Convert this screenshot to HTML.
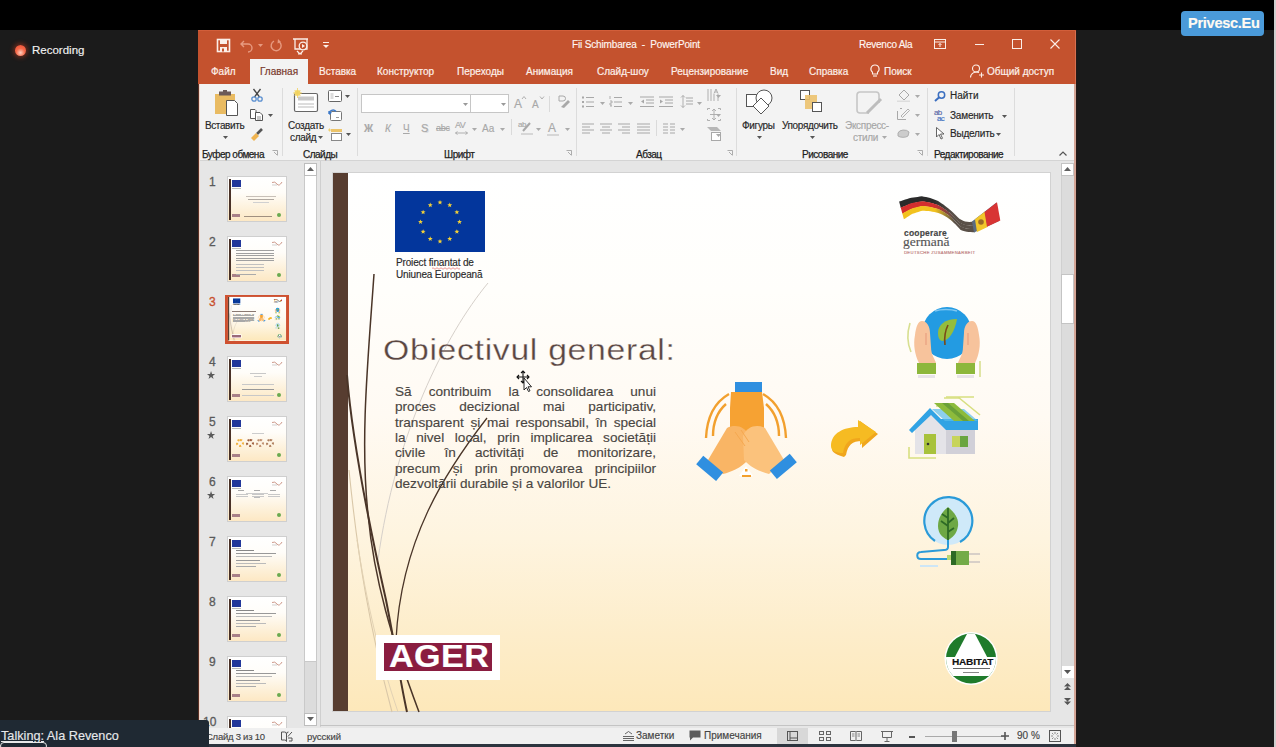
<!DOCTYPE html><html><head><meta charset="utf-8"><style>
*{margin:0;padding:0;box-sizing:border-box}
html,body{width:1276px;height:747px;overflow:hidden;background:#1b1b1b;font-family:"Liberation Sans",sans-serif}
.abs{position:absolute}
.t{position:absolute;white-space:nowrap;line-height:1;-webkit-text-stroke:0.15px currentColor}
svg{overflow:visible}
</style></head><body>
<div class="abs" style="left:0px;top:0px;width:1276px;height:30px;background:#000;"></div>
<div class="abs" style="left:1274px;top:0px;width:2px;height:747px;background:#cfcfcf;"></div>
<div class="abs" style="left:15px;top:45px;width:11px;height:11px;border-radius:50%;background:radial-gradient(circle at 50% 70%,#ffd0c0 0%,#f86a4a 45%,#e84a30 100%);box-shadow:0 0 4px 2px rgba(200,60,30,.45)"></div>
<div class="t" style="left:32px;top:45px;font-size:11.5px;color:#f2f2f2;">Recording</div>
<div class="abs" style="left:1181px;top:11px;width:83px;height:25px;background:#4a9ad9;border-radius:4px"></div>
<div class="t" style="left:1188px;top:15.5px;font-size:14.6px;color:#fffaf2;font-weight:bold;letter-spacing:-0.3px">Privesc.Eu</div>
<div class="abs" style="left:198px;top:30px;width:878px;height:714px;background:#e6e6e6;"></div>
<div class="abs" style="left:198px;top:30px;width:878px;height:54px;background:#c4522e;"></div>
<svg class="abs" style="left:217px;top:39px;" width="13" height="13" viewBox="0 0 13 13"><rect x="0.5" y="0.5" width="12" height="12" fill="none" stroke="#fbeee8" stroke-width="1.6"/><rect x="3" y="1" width="7" height="4" fill="#fbeee8"/><rect x="3" y="8" width="7" height="5" fill="#fbeee8"/><rect x="5" y="9.5" width="2" height="3" fill="#c4522e"/></svg>
<svg class="abs" style="left:240px;top:39px;" width="14" height="13" viewBox="0 0 14 13"><path d="M4 2 L1 5 L4 8 M1 5 H8 A4 4 0 0 1 8 13" fill="none" stroke="#e79a80" stroke-width="1.4"/></svg>
<svg class="abs" style="left:258px;top:44px;" width="5" height="3" viewBox="0 0 5 3"><path d="M0 0 H5 L2.5 3Z" fill="#e79a80"/></svg>
<svg class="abs" style="left:270px;top:39px;" width="13" height="13" viewBox="0 0 13 13"><path d="M9.5 3 A5 5 0 1 1 4 2.2" fill="none" stroke="#e79a80" stroke-width="1.4"/><path d="M8 0 L11 3 L7.5 4.5Z" fill="#e79a80"/></svg>
<svg class="abs" style="left:293px;top:38px;" width="16" height="17" viewBox="0 0 16 17"><path d="M0 1 H15 M2 1 V11 H14 V1" fill="none" stroke="#fbeee8" stroke-width="1.3"/><circle cx="10" cy="8" r="3.8" fill="#c4522e" stroke="#fbeee8" stroke-width="1.3"/><path d="M9 6 L12 8 L9 10Z" fill="#fbeee8"/><path d="M4 13 L7 16 M10 13 L7 16 M5 16 H9" stroke="#fbeee8" stroke-width="1.2"/></svg>
<svg class="abs" style="left:323px;top:42px;" width="6" height="7" viewBox="0 0 6 7"><path d="M0 0.5 H6" stroke="#fbeee8" stroke-width="1"/><path d="M0 3 H6 L3 6Z" fill="#fbeee8"/></svg>
<div class="t" style="left:572px;top:40px;font-size:10px;color:#fff6f2;letter-spacing:-0.15px">Fii Schimbarea &nbsp;- &nbsp;PowerPoint</div>
<div class="t" style="left:859px;top:40px;font-size:10px;color:#fff6f2;letter-spacing:-0.25px">Revenco Ala</div>
<svg class="abs" style="left:934px;top:39px;" width="12" height="10" viewBox="0 0 12 10"><rect x="0.5" y="0.5" width="11" height="9" fill="none" stroke="#fbeee8" stroke-width="1"/><path d="M0.5 3 H11.5 M6 4.5 V8 M4.5 6 L6 4.5 L7.5 6" fill="none" stroke="#fbeee8" stroke-width="1"/></svg>
<div class="abs" style="left:975px;top:44px;width:9px;height:1px;background:#fbeee8;"></div>
<svg class="abs" style="left:1012px;top:39px;" width="10" height="10" viewBox="0 0 10 10"><rect x="0.5" y="0.5" width="9" height="9" fill="none" stroke="#fbeee8" stroke-width="1"/></svg>
<svg class="abs" style="left:1050px;top:39px;" width="10" height="10" viewBox="0 0 10 10"><path d="M0.5 0.5 L9.5 9.5 M9.5 0.5 L0.5 9.5" stroke="#fbeee8" stroke-width="1.1"/></svg>
<div class="abs" style="left:250px;top:59px;width:58px;height:25px;background:#f3f3f3;"></div>
<div class="t" style="left:211px;top:67.3px;font-size:10px;color:#fdf0ea;-webkit-text-stroke:0.2px #fdf0ea">Файл</div>
<div class="t" style="left:319px;top:67.3px;font-size:10px;color:#fdf0ea;-webkit-text-stroke:0.2px #fdf0ea">Вставка</div>
<div class="t" style="left:377px;top:67.3px;font-size:10px;color:#fdf0ea;-webkit-text-stroke:0.2px #fdf0ea">Конструктор</div>
<div class="t" style="left:457px;top:67.3px;font-size:10px;color:#fdf0ea;-webkit-text-stroke:0.2px #fdf0ea">Переходы</div>
<div class="t" style="left:526px;top:67.3px;font-size:10px;color:#fdf0ea;-webkit-text-stroke:0.2px #fdf0ea">Анимация</div>
<div class="t" style="left:597px;top:67.3px;font-size:10px;color:#fdf0ea;-webkit-text-stroke:0.2px #fdf0ea">Слайд-шоу</div>
<div class="t" style="left:671px;top:67.3px;font-size:10px;color:#fdf0ea;-webkit-text-stroke:0.2px #fdf0ea">Рецензирование</div>
<div class="t" style="left:770px;top:67.3px;font-size:10px;color:#fdf0ea;-webkit-text-stroke:0.2px #fdf0ea">Вид</div>
<div class="t" style="left:809px;top:67.3px;font-size:10px;color:#fdf0ea;-webkit-text-stroke:0.2px #fdf0ea">Справка</div>
<div class="t" style="left:884px;top:67.3px;font-size:10px;color:#fdf0ea;-webkit-text-stroke:0.2px #fdf0ea">Поиск</div>
<div class="t" style="left:987px;top:67.3px;font-size:10px;color:#fdf0ea;-webkit-text-stroke:0.2px #fdf0ea">Общий доступ</div>
<div class="t" style="left:260px;top:67.3px;font-size:10px;color:#7a3a2e;-webkit-text-stroke:0.2px #7a3a2e">Главная</div>
<svg class="abs" style="left:870px;top:64px;" width="10" height="14" viewBox="0 0 10 14"><path d="M5 1 A4 4 0 0 1 7.5 8.2 V10 H2.5 V8.2 A4 4 0 0 1 5 1Z" fill="none" stroke="#fdf0ea" stroke-width="1.1"/><path d="M3 12 H7" stroke="#fdf0ea" stroke-width="1.1"/></svg>
<svg class="abs" style="left:970px;top:64px;" width="15" height="14" viewBox="0 0 15 14"><circle cx="6" cy="4.5" r="3.5" fill="none" stroke="#fdf0ea" stroke-width="1.1"/><path d="M0.5 13.5 A6 5.5 0 0 1 9 8.5" fill="none" stroke="#fdf0ea" stroke-width="1.1"/><path d="M9 11 H14 M11.5 8.5 V13.5" stroke="#fdf0ea" stroke-width="1.1"/></svg>
<div class="abs" style="left:198px;top:84px;width:878px;height:76px;background:#f3f3f3;"></div>
<div class="abs" style="left:198px;top:160px;width:878px;height:1px;background:#d4d4d4;"></div>
<div class="t" style="left:202px;top:149.5px;font-size:10px;color:#1e1e1e;letter-spacing:-0.5px;-webkit-text-stroke:0.25px #1e1e1e">Буфер обмена</div>
<div class="t" style="left:303px;top:149.5px;font-size:10px;color:#1e1e1e;letter-spacing:-0.5px;-webkit-text-stroke:0.25px #1e1e1e">Слайды</div>
<div class="t" style="left:444px;top:149.5px;font-size:10px;color:#1e1e1e;letter-spacing:-0.5px;-webkit-text-stroke:0.25px #1e1e1e">Шрифт</div>
<div class="t" style="left:636px;top:149.5px;font-size:10px;color:#1e1e1e;letter-spacing:-0.5px;-webkit-text-stroke:0.25px #1e1e1e">Абзац</div>
<div class="t" style="left:802px;top:149.5px;font-size:10px;color:#1e1e1e;letter-spacing:-0.5px;-webkit-text-stroke:0.25px #1e1e1e">Рисование</div>
<div class="t" style="left:934px;top:149.5px;font-size:10px;color:#1e1e1e;letter-spacing:-0.5px;-webkit-text-stroke:0.25px #1e1e1e">Редактирование</div>
<div class="abs" style="left:282px;top:88px;width:1px;height:68px;background:#dcdcdc;"></div>
<div class="abs" style="left:357px;top:88px;width:1px;height:68px;background:#dcdcdc;"></div>
<div class="abs" style="left:576px;top:88px;width:1px;height:68px;background:#dcdcdc;"></div>
<div class="abs" style="left:736px;top:88px;width:1px;height:68px;background:#dcdcdc;"></div>
<div class="abs" style="left:927px;top:88px;width:1px;height:68px;background:#dcdcdc;"></div>
<div class="abs" style="left:1014px;top:88px;width:1px;height:68px;background:#dcdcdc;"></div>
<svg class="abs" style="left:215px;top:90px;" width="24" height="26" viewBox="0 0 24 26"><rect x="0" y="4" width="20" height="20" fill="#e9bb62"/><rect x="4" y="1.5" width="12" height="4" fill="#6b5a58"/><rect x="8" y="0" width="4" height="3" fill="#6b5a58"/><path d="M11.5 10.5 H19.5 L22.5 13.5 V25.5 H11.5Z" fill="#fff" stroke="#555" stroke-width="1"/></svg>
<div class="t" style="left:205px;top:121px;font-size:10px;color:#262626;letter-spacing:-0.4px">Вставить</div>
<svg class="abs" style="left:223px;top:136px;" width="5" height="3" viewBox="0 0 5 3"><path d="M0 0 H5 L2.5 3Z" fill="#555"/></svg>
<svg class="abs" style="left:251px;top:89px;" width="12" height="13" viewBox="0 0 12 13"><path d="M2.5 0 L8.5 8 M9.5 0 L3.5 8" stroke="#454545" stroke-width="1.3"/><circle cx="3" cy="10" r="2.2" fill="none" stroke="#5a8fd0" stroke-width="1.3"/><circle cx="9" cy="10" r="2.2" fill="none" stroke="#5a8fd0" stroke-width="1.3"/></svg>
<svg class="abs" style="left:250px;top:109px;" width="13" height="12" viewBox="0 0 13 12"><path d="M0.5 0.5 H5 L6 1.5 V9.5 H0.5Z" fill="#fff" stroke="#555" stroke-width="1"/><path d="M5.5 3.5 H10 L12.5 6 V11.5 H5.5Z" fill="#fff" stroke="#555" stroke-width="1"/><path d="M7 8 H11 M7 10 H11" stroke="#777" stroke-width="0.8"/></svg>
<svg class="abs" style="left:268px;top:114px;" width="5" height="3" viewBox="0 0 5 3"><path d="M0 0 H5 L2.5 3Z" fill="#555"/></svg>
<svg class="abs" style="left:251px;top:128px;" width="12" height="13" viewBox="0 0 12 13"><path d="M6 6 L11 1" stroke="#555" stroke-width="2.6"/><path d="M0 10 L5 5 L8 8 L3 13Z" fill="#f0b450"/></svg>
<svg class="abs" style="left:293px;top:88px;" width="26" height="25" viewBox="0 0 26 25"><rect x="1.5" y="5.5" width="23" height="18" rx="1.5" fill="#fff" stroke="#666" stroke-width="1.2"/><rect x="5" y="8.5" width="16" height="4" fill="#c8c8c8"/><path d="M5 16 H21 M5 19 H21" stroke="#bbb" stroke-width="1"/><circle cx="4.5" cy="5" r="3" fill="#f5d96a"/><path d="M4.5 0 V10 M0 5 H9 M1.5 2 L7.5 8 M7.5 2 L1.5 8" stroke="#f0d060" stroke-width="0.8"/></svg>
<div class="t" style="left:288px;top:121px;font-size:10px;color:#262626;letter-spacing:-0.3px">Создать</div>
<div class="t" style="left:290px;top:133px;font-size:10px;color:#262626;letter-spacing:-0.3px">слайд</div>
<svg class="abs" style="left:318px;top:136px;" width="5" height="3" viewBox="0 0 5 3"><path d="M0 0 H5 L2.5 3Z" fill="#555"/></svg>
<svg class="abs" style="left:328px;top:90px;" width="14" height="12" viewBox="0 0 14 12"><rect x="0.5" y="0.5" width="13" height="11" rx="1" fill="#fff" stroke="#666" stroke-width="1"/><rect x="2.5" y="3" width="3" height="6" fill="#ddd"/><path d="M7 6.5 H11" stroke="#888" stroke-width="1"/></svg>
<svg class="abs" style="left:345px;top:95px;" width="5" height="3" viewBox="0 0 5 3"><path d="M0 0 H5 L2.5 3Z" fill="#555"/></svg>
<svg class="abs" style="left:328px;top:109px;" width="14" height="12" viewBox="0 0 14 12"><rect x="2.5" y="2.5" width="11" height="9" rx="1" fill="#fff" stroke="#777" stroke-width="1"/><path d="M1 5 A4 4 0 0 1 8 2.5" fill="none" stroke="#3b78c8" stroke-width="1.5"/><path d="M0 2 L1.5 6 L4 3.5Z" fill="#3b78c8"/><path d="M8 8.5 H11" stroke="#999" stroke-width="1"/></svg>
<svg class="abs" style="left:328px;top:127px;" width="15" height="14" viewBox="0 0 15 14"><path d="M0 3 L3 3 M1.5 1.5 L1.5 4.5" stroke="#f0d070" stroke-width="1"/><rect x="3" y="2" width="11" height="3" fill="#ecc46a"/><rect x="3.5" y="6.5" width="10" height="7" fill="#fff" stroke="#888" stroke-width="1"/></svg>
<svg class="abs" style="left:346px;top:133px;" width="5" height="3" viewBox="0 0 5 3"><path d="M0 0 H5 L2.5 3Z" fill="#555"/></svg>
<div class="abs" style="left:361px;top:94px;width:110px;height:19px;background:#fff;border:1px solid #c6c6c6"></div>
<div class="abs" style="left:470px;top:94px;width:39px;height:19px;background:#fff;border:1px solid #c6c6c6"></div>
<svg class="abs" style="left:463px;top:103px;" width="5" height="3" viewBox="0 0 5 3"><path d="M0 0 H5 L2.5 3Z" fill="#999"/></svg>
<svg class="abs" style="left:501px;top:103px;" width="5" height="3" viewBox="0 0 5 3"><path d="M0 0 H5 L2.5 3Z" fill="#999"/></svg>
<div class="t" style="left:514px;top:98px;font-size:12px;color:#a8a8a8;">A</div>
<div class="t" style="left:532px;top:100px;font-size:10px;color:#a8a8a8;">A</div>
<svg class="abs" style="left:522px;top:96px;" width="4" height="4" viewBox="0 0 4 4"><path d="M0 3 L2 0.5 L4 3" fill="none" stroke="#a8a8a8" stroke-width="0.9"/></svg>
<svg class="abs" style="left:540px;top:96px;" width="4" height="4" viewBox="0 0 4 4"><path d="M0 0.5 L2 3 L4 0.5" fill="none" stroke="#a8a8a8" stroke-width="0.9"/></svg>
<div class="abs" style="left:549px;top:96px;width:1px;height:16px;background:#dadada;"></div>
<svg class="abs" style="left:557px;top:95px;" width="13" height="13" viewBox="0 0 13 13"><path d="M2 1 H6 A2.5 2.5 0 0 1 6 6 H2Z" fill="none" stroke="#a8a8a8" stroke-width="1"/><path d="M4 12 L11 5 L13 7 L7 13Z" fill="#a8a8a8"/></svg>
<div class="t" style="left:364px;top:124px;font-size:10px;color:#a8a8a8;font-weight:bold">Ж</div>
<div class="t" style="left:385px;top:124px;font-size:10px;color:#a8a8a8;font-style:italic">К</div>
<div class="t" style="left:403px;top:124px;font-size:10px;color:#a8a8a8;text-decoration:underline">Ч</div>
<div class="t" style="left:421px;top:123px;font-size:11px;color:#a8a8a8;text-shadow:1px 1px 0 #ddd">S</div>
<div class="t" style="left:436px;top:124px;font-size:9px;color:#a8a8a8;text-decoration:line-through;letter-spacing:-0.3px">abc</div>
<div class="t" style="left:455px;top:121px;font-size:9px;color:#a8a8a8;letter-spacing:-0.5px">AV</div>
<svg class="abs" style="left:455px;top:131px;" width="13" height="4" viewBox="0 0 13 4"><path d="M0.5 2 H12.5 M2.5 0.5 L0.5 2 L2.5 3.5 M10.5 0.5 L12.5 2 L10.5 3.5" fill="none" stroke="#a8a8a8" stroke-width="0.9"/></svg>
<svg class="abs" style="left:472px;top:128px;" width="5" height="3" viewBox="0 0 5 3"><path d="M0 0 H5 L2.5 3Z" fill="#aaa"/></svg>
<div class="t" style="left:482px;top:124px;font-size:10px;color:#a8a8a8;">Aa</div>
<svg class="abs" style="left:500px;top:128px;" width="5" height="3" viewBox="0 0 5 3"><path d="M0 0 H5 L2.5 3Z" fill="#aaa"/></svg>
<div class="abs" style="left:511px;top:119px;width:1px;height:16px;background:#dadada;"></div>
<div class="t" style="left:518px;top:121px;font-size:8px;color:#a8a8a8;letter-spacing:-0.5px">ab</div>
<svg class="abs" style="left:521px;top:121px;" width="11" height="14" viewBox="0 0 11 14"><path d="M2 10 L9 2" stroke="#a8a8a8" stroke-width="2"/><rect x="0" y="12" width="12" height="2" fill="#d6d6d6"/></svg>
<svg class="abs" style="left:536px;top:128px;" width="5" height="3" viewBox="0 0 5 3"><path d="M0 0 H5 L2.5 3Z" fill="#aaa"/></svg>
<div class="t" style="left:548px;top:122px;font-size:12px;color:#a8a8a8;">A</div>
<svg class="abs" style="left:547px;top:134px;" width="12" height="2" viewBox="0 0 12 2"><rect width="12" height="2" fill="#d6d6d6"/></svg>
<svg class="abs" style="left:565px;top:128px;" width="5" height="3" viewBox="0 0 5 3"><path d="M0 0 H5 L2.5 3Z" fill="#aaa"/></svg>
<svg class="abs" style="left:566px;top:150px;" width="6" height="6" viewBox="0 0 6 6"><path d="M0.5 0.5 H5.5 V5.5 M2 2 L5 5" fill="none" stroke="#9a9a9a" stroke-width="0.8"/></svg>
<svg class="abs" style="left:272px;top:150px;" width="6" height="6" viewBox="0 0 6 6"><path d="M0.5 0.5 H5.5 V5.5 M2 2 L5 5" fill="none" stroke="#9a9a9a" stroke-width="0.8"/></svg>
<svg class="abs" style="left:727px;top:150px;" width="6" height="6" viewBox="0 0 6 6"><path d="M0.5 0.5 H5.5 V5.5 M2 2 L5 5" fill="none" stroke="#9a9a9a" stroke-width="0.8"/></svg>
<svg class="abs" style="left:917px;top:150px;" width="6" height="6" viewBox="0 0 6 6"><path d="M0.5 0.5 H5.5 V5.5 M2 2 L5 5" fill="none" stroke="#9a9a9a" stroke-width="0.8"/></svg>
<svg class="abs" style="left:582px;top:96px;" width="13" height="12" viewBox="0 0 13 12"><rect x="0" y="0.5" width="2" height="2" fill="#a8a8a8"/><rect x="0" y="5" width="2" height="2" fill="#a8a8a8"/><rect x="0" y="9.5" width="2" height="2" fill="#a8a8a8"/><path d="M4 1.5 H12 M4 6 H12 M4 10.5 H12" stroke="#a8a8a8" stroke-width="1.2"/></svg>
<svg class="abs" style="left:600px;top:102px;" width="5" height="3" viewBox="0 0 5 3"><path d="M0 0 H5 L2.5 3Z" fill="#aaa"/></svg>
<svg class="abs" style="left:610px;top:96px;" width="13" height="12" viewBox="0 0 13 12"><path d="M0 0 V3 M0 5 H2 V7 H0 V9 H2 M0 10 H2" stroke="#a8a8a8" stroke-width="0.9" fill="none"/><path d="M4 1.5 H12 M4 6 H12 M4 10.5 H12" stroke="#a8a8a8" stroke-width="1.2"/></svg>
<svg class="abs" style="left:628px;top:102px;" width="5" height="3" viewBox="0 0 5 3"><path d="M0 0 H5 L2.5 3Z" fill="#aaa"/></svg>
<svg class="abs" style="left:640px;top:96px;" width="14" height="12" viewBox="0 0 14 12"><path d="M0 1 H14 M6 4 H14 M6 7 H14 M0 10.5 H14" stroke="#a8a8a8" stroke-width="1.1"/><path d="M4 3.5 L1 5.5 L4 7.5Z" fill="#a8a8a8"/></svg>
<svg class="abs" style="left:659px;top:96px;" width="14" height="12" viewBox="0 0 14 12"><path d="M0 1 H14 M6 4 H14 M6 7 H14 M0 10.5 H14" stroke="#a8a8a8" stroke-width="1.1"/><path d="M1 3.5 L4 5.5 L1 7.5Z" fill="#a8a8a8"/></svg>
<svg class="abs" style="left:681px;top:95px;" width="12" height="13" viewBox="0 0 12 13"><path d="M2 0.5 V12.5 M0 2.5 L2 0.5 L4 2.5 M0 10.5 L2 12.5 L4 10.5" fill="none" stroke="#a8a8a8" stroke-width="0.9"/><path d="M5 3 H12 M5 6 H12 M5 9 H12" stroke="#a8a8a8" stroke-width="1.1"/></svg>
<svg class="abs" style="left:697px;top:102px;" width="5" height="3" viewBox="0 0 5 3"><path d="M0 0 H5 L2.5 3Z" fill="#aaa"/></svg>
<svg class="abs" style="left:707px;top:89px;" width="14" height="13" viewBox="0 0 14 13"><path d="M1 0 V12 M4 0 V12 M7 5 V12 M11 5 V12" stroke="#a8a8a8" stroke-width="0.9"/><path d="M9 0 L7 4.5 M9 0 L11 4.5 M8 3 H10" stroke="#a8a8a8" stroke-width="0.9" fill="none"/></svg>
<svg class="abs" style="left:716px;top:95px;" width="5" height="3" viewBox="0 0 5 3"><path d="M0 0 H5 L2.5 3Z" fill="#aaa"/></svg>
<svg class="abs" style="left:707px;top:108px;" width="14" height="13" viewBox="0 0 14 13"><path d="M0.5 2 V0.5 H3 M11 0.5 H13.5 V2 M0.5 11 V12.5 H3 M11 12.5 H13.5 V11" fill="none" stroke="#a8a8a8" stroke-width="0.9"/><path d="M3 6.5 H11 M7 1 V12 M5 3 L7 1 L9 3 M5 10 L7 12 L9 10" fill="none" stroke="#a8a8a8" stroke-width="0.9"/></svg>
<svg class="abs" style="left:716px;top:114px;" width="5" height="3" viewBox="0 0 5 3"><path d="M0 0 H5 L2.5 3Z" fill="#aaa"/></svg>
<svg class="abs" style="left:707px;top:127px;" width="14" height="14" viewBox="0 0 14 14"><path d="M0 0 H10 L14 4 H4Z" fill="#a8a8a8" opacity=".8"/><rect x="4.5" y="5.5" width="9" height="8" fill="#fff" stroke="#a8a8a8"/></svg>
<svg class="abs" style="left:716px;top:134px;" width="5" height="3" viewBox="0 0 5 3"><path d="M0 0 H5 L2.5 3Z" fill="#aaa"/></svg>
<svg class="abs" style="left:582px;top:123px;" width="13" height="11" viewBox="0 0 13 11"><path d="M0 1 H12 M0 4 H8 M0 7 H12 M0 10 H8" stroke="#a8a8a8" stroke-width="1.1"/></svg>
<svg class="abs" style="left:600px;top:123px;" width="13" height="11" viewBox="0 0 13 11"><path d="M0 1 H12 M2 4 H10 M0 7 H12 M2 10 H10" stroke="#a8a8a8" stroke-width="1.1"/></svg>
<svg class="abs" style="left:618px;top:123px;" width="13" height="11" viewBox="0 0 13 11"><path d="M0 1 H12 M4 4 H12 M0 7 H12 M4 10 H12" stroke="#a8a8a8" stroke-width="1.1"/></svg>
<svg class="abs" style="left:637px;top:123px;" width="13" height="11" viewBox="0 0 13 11"><path d="M0 1 H13 M0 4 H13 M0 7 H13 M0 10 H13" stroke="#a8a8a8" stroke-width="1.1"/></svg>
<div class="abs" style="left:656px;top:120px;width:1px;height:16px;background:#dadada;"></div>
<svg class="abs" style="left:663px;top:123px;" width="12" height="11" viewBox="0 0 12 11"><path d="M0 1 H5 M7 1 H12 M0 4 H5 M7 4 H12 M0 7 H5 M7 7 H12 M0 10 H5 M7 10 H12" stroke="#a8a8a8" stroke-width="1.1"/></svg>
<svg class="abs" style="left:680px;top:128px;" width="5" height="3" viewBox="0 0 5 3"><path d="M0 0 H5 L2.5 3Z" fill="#aaa"/></svg>
<svg class="abs" style="left:746px;top:89px;" width="27" height="27" viewBox="0 0 27 27"><rect x="0.5" y="5.5" width="14" height="12" fill="#fff" stroke="#555" stroke-width="1"/><circle cx="18" cy="9" r="8" fill="#fff" stroke="#555" stroke-width="1"/><path d="M15 9 L23 17 L15 25 L7 17Z" fill="#fff" stroke="#555" stroke-width="1"/></svg>
<div class="t" style="left:742px;top:121px;font-size:10px;color:#262626;letter-spacing:-0.3px">Фигуры</div>
<svg class="abs" style="left:757px;top:136px;" width="5" height="3" viewBox="0 0 5 3"><path d="M0 0 H5 L2.5 3Z" fill="#555"/></svg>
<svg class="abs" style="left:800px;top:90px;" width="23" height="24" viewBox="0 0 23 24"><rect x="0.5" y="0.5" width="9" height="9" fill="#fff" stroke="#555"/><rect x="5" y="5" width="12" height="14" fill="#ecc26e" opacity=".9"/><rect x="12.5" y="12.5" width="9" height="9" fill="#fff" stroke="#555"/></svg>
<div class="t" style="left:782px;top:121px;font-size:10px;color:#262626;letter-spacing:-0.35px">Упорядочить</div>
<svg class="abs" style="left:810px;top:136px;" width="5" height="3" viewBox="0 0 5 3"><path d="M0 0 H5 L2.5 3Z" fill="#555"/></svg>
<svg class="abs" style="left:857px;top:91px;" width="26" height="25" viewBox="0 0 26 25"><path d="M3 1 H19 A3 3 0 0 1 22 4 V12 M3 1 A3 3 0 0 0 0 4 V19 A3 3 0 0 0 3 22 H12" fill="none" stroke="#c6c6c6" stroke-width="1.6"/><path d="M10 22 L24 8" stroke="#bdbdbd" stroke-width="3"/></svg>
<div class="t" style="left:845px;top:121px;font-size:10px;color:#a6a6a6;letter-spacing:-0.3px">Экспресс-</div>
<div class="t" style="left:853px;top:133px;font-size:10px;color:#a6a6a6;letter-spacing:-0.3px">стили</div>
<svg class="abs" style="left:882px;top:136px;" width="5" height="3" viewBox="0 0 5 3"><path d="M0 0 H5 L2.5 3Z" fill="#aaa"/></svg>
<svg class="abs" style="left:897px;top:89px;" width="13" height="13" viewBox="0 0 13 13"><path d="M2 6 L7 1 L12 6 L7 11Z" fill="none" stroke="#a8a8a8" stroke-width="1"/><rect x="0" y="11.5" width="13" height="1.5" fill="#ddd"/></svg>
<svg class="abs" style="left:915px;top:95px;" width="5" height="3" viewBox="0 0 5 3"><path d="M0 0 H5 L2.5 3Z" fill="#aaa"/></svg>
<svg class="abs" style="left:897px;top:108px;" width="13" height="12" viewBox="0 0 13 12"><path d="M0.5 3 V11.5 H9 M3 0.5 H5" fill="none" stroke="#a8a8a8" stroke-width="1"/><path d="M4 8 L11 1 L12.5 2.5 L5.5 9.5Z" fill="none" stroke="#a8a8a8" stroke-width="0.9"/></svg>
<svg class="abs" style="left:915px;top:114px;" width="5" height="3" viewBox="0 0 5 3"><path d="M0 0 H5 L2.5 3Z" fill="#aaa"/></svg>
<svg class="abs" style="left:897px;top:127px;" width="13" height="11" viewBox="0 0 13 11"><path d="M1 6 A6 4 0 0 1 12 5 L11 9 A6 3 0 0 1 1 9Z" fill="#ccc" stroke="#a8a8a8" stroke-width="0.9"/></svg>
<svg class="abs" style="left:915px;top:133px;" width="5" height="3" viewBox="0 0 5 3"><path d="M0 0 H5 L2.5 3Z" fill="#aaa"/></svg>
<svg class="abs" style="left:934px;top:91px;" width="12" height="10" viewBox="0 0 12 10"><circle cx="7.5" cy="4" r="3.2" fill="none" stroke="#3b6fc0" stroke-width="1.5"/><path d="M5.2 6.3 L1 10" stroke="#3b6fc0" stroke-width="2"/></svg>
<div class="t" style="left:950px;top:91px;font-size:10px;color:#262626;">Найти</div>
<div class="t" style="left:934px;top:109px;font-size:8px;color:#5a6aa8;letter-spacing:-0.6px">ab</div>
<div class="t" style="left:937px;top:115px;font-size:8px;color:#3b6fc0;letter-spacing:-0.6px">ac</div>
<div class="t" style="left:950px;top:111px;font-size:10px;color:#262626;letter-spacing:-0.2px">Заменить</div>
<svg class="abs" style="left:1002px;top:115px;" width="5" height="3" viewBox="0 0 5 3"><path d="M0 0 H5 L2.5 3Z" fill="#555"/></svg>
<svg class="abs" style="left:936px;top:127px;" width="10" height="13" viewBox="0 0 10 13"><path d="M0.5 0.5 L0.5 10 L3 7.5 L5 12 L6.5 11.3 L4.5 7 L8 7Z" fill="#fff" stroke="#555" stroke-width="0.9"/></svg>
<div class="t" style="left:950px;top:129px;font-size:10px;color:#262626;letter-spacing:-0.2px">Выделить</div>
<svg class="abs" style="left:996px;top:133px;" width="5" height="3" viewBox="0 0 5 3"><path d="M0 0 H5 L2.5 3Z" fill="#555"/></svg>
<svg class="abs" style="left:1059px;top:151px;" width="8" height="5" viewBox="0 0 8 5"><path d="M0.5 4.5 L4 1 L7.5 4.5" fill="none" stroke="#555" stroke-width="1.2"/></svg>
<div class="abs" style="left:198px;top:161px;width:878px;height:566px;background:#e6e6e6;"></div>
<div class="abs" style="left:320px;top:161px;width:1px;height:566px;background:#cfcfcf;"></div>
<div class="abs" style="left:304px;top:163px;width:13px;height:563px;background:#dcdcdc;border-left:1px solid #c9c9c9;border-right:1px solid #c9c9c9"></div>
<div class="abs" style="left:304px;top:175px;width:13px;height:487px;background:#ffffff;border:1px solid #c9c9c9"></div>
<div class="abs" style="left:304px;top:163px;width:13px;height:13px;background:#fff;border:1px solid #bdbdbd"></div>
<svg class="abs" style="left:307px;top:167px;" width="7" height="4" viewBox="0 0 7 4"><path d="M0 4 L3.5 0 L7 4Z" fill="#606060"/></svg>
<div class="abs" style="left:304px;top:713px;width:13px;height:13px;background:#fff;border:1px solid #bdbdbd"></div>
<svg class="abs" style="left:307px;top:717px;" width="7" height="4" viewBox="0 0 7 4"><path d="M0 0 L3.5 4 L7 0Z" fill="#606060"/></svg>
<div class="abs" style="left:1061px;top:163px;width:13px;height:515px;background:#dcdcdc;border-left:1px solid #d0d0d0"></div>
<div class="abs" style="left:1061px;top:163px;width:13px;height:13px;background:#fff;border:1px solid #c4c4c4"></div>
<svg class="abs" style="left:1064px;top:167px;" width="7" height="4" viewBox="0 0 7 4"><path d="M0 4 L3.5 0 L7 4Z" fill="#606060"/></svg>
<div class="abs" style="left:1061px;top:274px;width:13px;height:50px;background:#fff;border:1px solid #c4c4c4"></div>
<div class="abs" style="left:1062px;top:666px;width:12px;height:12px;background:#fff;"></div>
<svg class="abs" style="left:1064px;top:670px;" width="7" height="4" viewBox="0 0 7 4"><path d="M0 0 L3.5 4 L7 0Z" fill="#555"/></svg>
<svg class="abs" style="left:1064px;top:683px;" width="7" height="7" viewBox="0 0 7 7"><path d="M0 3.5 L3.5 0 L7 3.5Z M0 7 L3.5 3.5 L7 7Z" fill="#555"/></svg>
<svg class="abs" style="left:1064px;top:698px;" width="7" height="7" viewBox="0 0 7 7"><path d="M0 0 L3.5 3.5 L7 0Z M0 3.5 L3.5 7 L7 3.5Z" fill="#555"/></svg>
<div class="abs" style="left:320px;top:725px;width:754px;height:1px;background:#c4c4c4;"></div>
<div class="abs" style="left:198px;top:728px;width:876px;height:16px;background:#f0f0f0;"></div>
<div class="t" style="left:206px;top:731.5px;font-size:9.5px;color:#444;letter-spacing:-0.25px">Слайд 3 из 10</div>
<svg class="abs" style="left:281px;top:731px;" width="12" height="11" viewBox="0 0 12 11"><path d="M0.5 1 H3.5 Q5.5 1 5.5 3 V10.5 Q5.5 9 3.5 9 H0.5Z M5.5 3 Q5.5 1 7.5 1" fill="none" stroke="#555" stroke-width="1"/><path d="M7 5.5 Q9 3 11 1 M7 7 H11 V10 H8" fill="none" stroke="#555" stroke-width="1"/></svg>
<div class="t" style="left:307px;top:731.5px;font-size:9.5px;color:#444;">русский</div>
<svg class="abs" style="left:623px;top:731px;" width="11" height="10" viewBox="0 0 11 10"><path d="M2 3 L5.5 0.5 L9 3" fill="none" stroke="#555" stroke-width="0.9"/><path d="M0 5.5 H11 M0 7.5 H11 M0 9.5 H11" stroke="#555" stroke-width="0.9"/></svg>
<div class="t" style="left:636px;top:731px;font-size:10px;color:#444;">Заметки</div>
<svg class="abs" style="left:689px;top:730px;" width="12" height="11" viewBox="0 0 12 11"><path d="M0.5 0.5 H11.5 V7.5 H4 L1 10.5 V7.5 H0.5Z" fill="#5b5b5b"/></svg>
<div class="t" style="left:704px;top:731px;font-size:10px;color:#444;">Примечания</div>
<div class="abs" style="left:777px;top:728px;width:31px;height:16px;background:#d8d8d8;"></div>
<svg class="abs" style="left:787px;top:731px;" width="11" height="10" viewBox="0 0 11 10"><rect x="0.5" y="0.5" width="10" height="9" fill="none" stroke="#555"/><path d="M3 0.5 V9.5 M3 7 H10.5" stroke="#555"/></svg>
<svg class="abs" style="left:819px;top:731px;" width="12" height="10" viewBox="0 0 12 10"><rect x="0.5" y="0.5" width="4" height="3" fill="none" stroke="#666"/><rect x="7.5" y="0.5" width="4" height="3" fill="none" stroke="#666"/><rect x="0.5" y="6.5" width="4" height="3" fill="none" stroke="#666"/><rect x="7.5" y="6.5" width="4" height="3" fill="none" stroke="#666"/></svg>
<svg class="abs" style="left:850px;top:731px;" width="12" height="10" viewBox="0 0 12 10"><path d="M0.5 0.5 H5.5 L6 1 L6.5 0.5 H11.5 V9.5 H6.5 L6 9 L5.5 9.5 H0.5Z M6 1 V9" fill="none" stroke="#666"/><path d="M2 3 H4.5 M2 5 H4.5 M7.5 3 H10 M7.5 5 H10" stroke="#888"/></svg>
<svg class="abs" style="left:881px;top:731px;" width="12" height="11" viewBox="0 0 12 11"><path d="M0 0.5 H12 M1.5 0.5 V6.5 H10.5 V0.5 M6 6.5 V10.5 M3.5 10.5 H8.5" fill="none" stroke="#666"/></svg>
<div class="abs" style="left:909px;top:736px;width:6px;height:1.5px;background:#555;"></div>
<div class="abs" style="left:925px;top:736px;width:80px;height:1px;background:#aaa;"></div>
<div class="abs" style="left:952px;top:731px;width:5px;height:11px;background:#777;"></div>
<svg class="abs" style="left:1001px;top:732px;" width="8" height="8" viewBox="0 0 8 8"><path d="M4 0 V8 M0 4 H8" stroke="#555" stroke-width="1.6"/></svg>
<div class="t" style="left:1017px;top:731px;font-size:10px;color:#444;">90 %</div>
<svg class="abs" style="left:1049px;top:730px;" width="12" height="12" viewBox="0 0 12 12"><rect x="0.5" y="0.5" width="11" height="11" fill="none" stroke="#555"/><path d="M6 2 V4 M6 8 V10 M2 6 H4 M8 6 H10 M3 3 L4.5 4.5 M9 3 L7.5 4.5 M3 9 L4.5 7.5 M9 9 L7.5 7.5" stroke="#777" stroke-width="0.8"/></svg>
<div class="abs" style="left:333px;top:173px;width:717px;height:538px;background:linear-gradient(to bottom,#ffffff 0%,#fffefb 22%,#fffaf3 45%,#fef4df 68%,#fdedca 86%,#fde8ba 100%);box-shadow:0 0 0 1px #d2d2d2"></div>
<div class="abs" style="left:333px;top:173px;width:14.8px;height:538px;background:#573d30;"></div>
<svg class="abs" style="left:333px;top:173px;" width="717" height="538" viewBox="0 0 717 538"><g fill="none" transform="translate(-333,-173)"><path d="M488 283 C445 335 395 435 378 560" stroke="#d6d0ca" stroke-width="1"/><path d="M349 470 C358 560 370 630 392 712" stroke="#d9c7a8" stroke-width="1.1"/><path d="M357 540 C366 600 380 660 398 712" stroke="#e2d2b4" stroke-width="1"/><path d="M374 274 C368 360 360 440 368 514 C374 580 392 640 419 712" stroke="#4a3528" stroke-width="1.5"/><path d="M347 375 C352 440 368 520 386 600 C394 640 400 680 407 712" stroke="#4a3528" stroke-width="2"/><path d="M487 418 C445 472 401 540 396 640" stroke="#4a3528" stroke-width="1.3"/></g></svg>
<svg class="abs" style="left:395px;top:191px;" width="90" height="61" viewBox="0 0 90 61"><rect width="90" height="61" fill="#03369c"/><polygon points="45.00,8.90 45.65,10.61 47.47,10.70 46.05,11.84 46.53,13.60 45.00,12.60 43.47,13.60 43.95,11.84 42.53,10.70 44.35,10.61" fill="#f2d038"/><polygon points="54.75,11.51 55.40,13.22 57.22,13.31 55.80,14.45 56.28,16.22 54.75,15.21 53.22,16.22 53.70,14.45 52.28,13.31 54.10,13.22" fill="#f2d038"/><polygon points="61.89,18.65 62.53,20.36 64.36,20.45 62.93,21.59 63.42,23.35 61.89,22.35 60.36,23.35 60.84,21.59 59.41,20.45 61.24,20.36" fill="#f2d038"/><polygon points="64.50,28.40 65.15,30.11 66.97,30.20 65.55,31.34 66.03,33.10 64.50,32.10 62.97,33.10 63.45,31.34 62.03,30.20 63.85,30.11" fill="#f2d038"/><polygon points="61.89,38.15 62.53,39.86 64.36,39.95 62.93,41.09 63.42,42.85 61.89,41.85 60.36,42.85 60.84,41.09 59.41,39.95 61.24,39.86" fill="#f2d038"/><polygon points="54.75,45.29 55.40,47.00 57.22,47.08 55.80,48.23 56.28,49.99 54.75,48.99 53.22,49.99 53.70,48.23 52.28,47.08 54.10,47.00" fill="#f2d038"/><polygon points="45.00,47.90 45.65,49.61 47.47,49.70 46.05,50.84 46.53,52.60 45.00,51.60 43.47,52.60 43.95,50.84 42.53,49.70 44.35,49.61" fill="#f2d038"/><polygon points="35.25,45.29 35.90,47.00 37.72,47.08 36.30,48.23 36.78,49.99 35.25,48.99 33.72,49.99 34.20,48.23 32.78,47.08 34.60,47.00" fill="#f2d038"/><polygon points="28.11,38.15 28.76,39.86 30.59,39.95 29.16,41.09 29.64,42.85 28.11,41.85 26.58,42.85 27.07,41.09 25.64,39.95 27.47,39.86" fill="#f2d038"/><polygon points="25.50,28.40 26.15,30.11 27.97,30.20 26.55,31.34 27.03,33.10 25.50,32.10 23.97,33.10 24.45,31.34 23.03,30.20 24.85,30.11" fill="#f2d038"/><polygon points="28.11,18.65 28.76,20.36 30.59,20.45 29.16,21.59 29.64,23.35 28.11,22.35 26.58,23.35 27.07,21.59 25.64,20.45 27.47,20.36" fill="#f2d038"/><polygon points="35.25,11.51 35.90,13.22 37.72,13.31 36.30,14.45 36.78,16.22 35.25,15.21 33.72,16.22 34.20,14.45 32.78,13.31 34.60,13.22" fill="#f2d038"/></svg>
<div class="t" style="left:396px;top:258px;font-size:10px;color:#2a2a2a;letter-spacing:-0.15px">Proiect finantat de</div>
<div class="t" style="left:396px;top:269.5px;font-size:10px;color:#2a2a2a;letter-spacing:-0.15px">Uniunea Europeană</div>
<svg class="abs" style="left:432px;top:267px;" width="32" height="3" viewBox="0 0 32 3"><path d="M0 1.5 Q1 0 2 1.5 T4 1.5 T6 1.5 T8 1.5 T10 1.5 T12 1.5 T14 1.5 T16 1.5 T18 1.5 T20 1.5 T22 1.5 T24 1.5 T26 1.5 T28 1.5" fill="none" stroke="#e05050" stroke-width="0.6"/></svg>
<div class="t" style="left:383px;top:335.5px;font-size:29px;color:#5a4642;letter-spacing:0.6px;transform:scaleX(1.163);transform-origin:0 0;-webkit-text-stroke:0.3px #fffcf6">Obiectivul general:</div>
<div class="t" style="left:395px;top:385.00px;width:261px;font-size:13.6px;color:#4a4642;text-align:justify;text-align-last:justify">Să contribuim la consolidarea unui</div>
<div class="t" style="left:395px;top:400.37px;width:261px;font-size:13.6px;color:#4a4642;text-align:justify;text-align-last:justify">proces decizional mai participativ,</div>
<div class="t" style="left:395px;top:415.74px;width:261px;font-size:13.6px;color:#4a4642;text-align:justify;text-align-last:justify">transparent și mai responsabil, în special</div>
<div class="t" style="left:395px;top:431.11px;width:261px;font-size:13.6px;color:#4a4642;text-align:justify;text-align-last:justify">la nivel local, prin implicarea societății</div>
<div class="t" style="left:395px;top:446.48px;width:261px;font-size:13.6px;color:#4a4642;text-align:justify;text-align-last:justify">civile în activități de monitorizare,</div>
<div class="t" style="left:395px;top:461.85px;width:261px;font-size:13.6px;color:#4a4642;text-align:justify;text-align-last:justify">precum și prin promovarea principiilor</div>
<div class="t" style="left:395px;top:477.22px;font-size:13.6px;color:#4a4642;">dezvoltării durabile și a valorilor UE.</div>
<div class="abs" style="left:376px;top:635px;width:124px;height:45px;background:#ffffff;"></div>
<div class="abs" style="left:384px;top:643px;width:108px;height:28px;background:#8a1d40;"></div>
<div class="t" style="left:389px;top:640.8px;font-size:31.6px;color:#ffffff;font-weight:bold;letter-spacing:0.4px;transform:scaleX(1.08);transform-origin:0 0">AGER</div>
<svg class="abs" style="left:898px;top:196px;" width="104" height="38" viewBox="0 0 104 38"><defs><linearGradient id="gk" x1="0" x2="1" y1="0" y2="0"><stop offset="0.45" stop-color="#2a2a2a"/><stop offset="0.72" stop-color="#5a5048"/></linearGradient><linearGradient id="gr" x1="0" x2="1"><stop offset="0.45" stop-color="#d42e2e"/><stop offset="0.72" stop-color="#5a5048"/></linearGradient><linearGradient id="gy" x1="0" x2="1"><stop offset="0.45" stop-color="#f2c21e"/><stop offset="0.72" stop-color="#5a5048"/></linearGradient></defs><polygon points="1.1,5.6 3.1,4.9 5.1,4.3 7.2,3.6 9.2,2.9 11.2,2.3 13.3,1.8 15.4,1.5 17.5,1.2 19.6,0.9 21.7,0.6 23.9,0.3 25.9,0.7 28.0,1.1 30.1,1.6 32.2,2.0 34.2,2.7 36.2,3.5 38.2,4.3 40.1,5.1 41.9,6.3 43.7,7.4 45.4,8.6 47.2,9.9 48.8,11.2 50.5,12.5 52.2,13.9 53.7,15.3 55.3,16.8 56.8,18.3 58.3,19.8 59.8,21.3 61.4,22.7 63.2,23.8 65.1,24.7 67.1,25.4 69.2,25.7 71.4,26.0 73.5,25.8 75.6,25.6 76.0,29.4 73.9,29.5 71.8,29.6 69.7,29.4 67.6,29.2 65.7,28.5 63.7,27.7 61.9,26.8 60.3,25.4 58.9,23.9 57.4,22.4 55.9,20.9 54.4,19.4 52.9,18.0 51.3,16.6 49.6,15.4 47.9,14.1 46.2,12.9 44.5,11.8 42.7,10.7 40.9,9.6 38.9,8.8 36.9,8.2 35.0,7.5 33.0,6.9 30.9,6.5 28.8,6.2 26.8,5.8 24.7,5.6 22.6,5.7 20.6,6.1 18.5,6.5 16.5,6.9 14.4,7.4 12.4,7.9 10.5,8.7 8.6,9.5 6.6,10.3 4.7,11.1 2.8,12.0" fill="url(#gk)"/><polygon points="2.7,11.6 4.6,10.8 6.6,10.0 8.5,9.2 10.4,8.3 12.3,7.6 14.4,7.1 16.4,6.6 18.5,6.2 20.5,5.8 22.6,5.4 24.7,5.3 26.7,5.5 28.8,5.9 30.9,6.2 32.9,6.7 34.9,7.2 36.9,7.9 38.9,8.6 40.8,9.4 42.6,10.5 44.4,11.5 46.2,12.7 47.9,13.9 49.6,15.1 51.2,16.4 52.8,17.8 54.4,19.2 55.9,20.7 57.4,22.1 58.8,23.6 60.3,25.2 61.9,26.5 63.7,27.5 65.6,28.3 67.6,29.0 69.7,29.2 71.8,29.4 73.9,29.3 76.0,29.2 76.4,32.9 74.3,33.0 72.2,33.0 70.2,32.8 68.1,32.6 66.1,32.0 64.2,31.3 62.3,30.5 60.8,29.1 59.4,27.6 58.0,26.1 56.5,24.6 55.0,23.2 53.5,21.8 52.0,20.4 50.4,19.1 48.7,18.0 46.9,16.8 45.2,15.7 43.4,14.8 41.5,13.8 39.6,13.0 37.6,12.5 35.7,11.9 33.7,11.4 31.6,11.0 29.6,10.8 27.5,10.5 25.5,10.3 23.4,10.3 21.4,10.9 19.4,11.4 17.4,11.9 15.5,12.4 13.5,13.0 11.6,13.9 9.8,14.9 8.0,15.9 6.2,16.8 4.4,17.8" fill="url(#gr)"/><polygon points="4.3,17.5 6.1,16.5 7.9,15.5 9.7,14.6 11.6,13.6 13.4,12.7 15.4,12.1 17.4,11.6 19.4,11.1 21.4,10.6 23.4,10.1 25.4,10.1 27.5,10.2 29.5,10.5 31.6,10.7 33.6,11.2 35.6,11.7 37.6,12.2 39.6,12.8 41.5,13.6 43.3,14.5 45.1,15.5 46.9,16.6 48.6,17.7 50.3,18.9 52.0,20.2 53.5,21.5 55.0,23.0 56.5,24.4 58.0,25.9 59.4,27.4 60.8,28.9 62.3,30.3 64.2,31.1 66.1,31.8 68.1,32.4 70.1,32.6 72.2,32.8 74.3,32.8 76.3,32.7 76.7,36.2 74.7,36.2 72.6,36.1 70.6,36.0 68.6,35.8 66.6,35.3 64.7,34.7 62.7,34.0 61.3,32.5 59.9,31.1 58.5,29.6 57.1,28.1 55.6,26.7 54.1,25.3 52.7,23.9 51.0,22.7 49.3,21.6 47.6,20.5 45.9,19.4 44.0,18.6 42.2,17.8 40.3,16.9 38.3,16.5 36.3,16.1 34.3,15.7 32.3,15.3 30.3,15.1 28.3,15.0 26.2,14.8 24.2,14.7 22.2,15.3 20.3,16.0 18.4,16.6 16.4,17.2 14.5,17.8 12.7,18.8 11.0,20.0 9.3,21.1 7.6,22.2 5.9,23.3" fill="url(#gy)"/><path d="M74 25.5 L98.5 6.5 L101 25 L76 36.5Z" fill="#5a6a80"/><path d="M77 23.2 L87 15.5 L89.5 31 L79 36Z" fill="#f2c62a"/><path d="M86.5 16 L99 6.2 L102.3 24.5 L89 30.8Z" fill="#d83434"/><circle cx="83" cy="26" r="2.8" fill="#9a6a28"/></svg>
<div class="t" style="left:904px;top:229px;font-size:8.5px;color:#444;font-weight:bold;letter-spacing:0.2px">cooperare</div>
<div class="t" style="left:903px;top:235px;font-size:13.5px;color:#555;font-family:Liberation Serif,serif;letter-spacing:0px">germană</div>
<div class="t" style="left:904px;top:251px;font-size:4.2px;color:#c08080;letter-spacing:0.35px">DEUTSCHE ZUSAMMENARBEIT</div>
<svg class="abs" style="left:905px;top:305px;" width="80" height="75" viewBox="0 0 80 75"><path d="M5 18 C2 28 2 38 6 47" fill="none" stroke="#d8df90" stroke-width="1.6"/><path d="M75 56 V72" stroke="#d8df90" stroke-width="1.6"/><ellipse cx="42" cy="28" rx="25" ry="26" fill="#239be2"/><path d="M30 6 C36 4 46 4 52 6" stroke="#7fc7f2" stroke-width="1.5" fill="none"/><path d="M33 28 C33 20 40 14 52 14 C50 26 44 36 37 36 C34 35 33 32 33 28Z" fill="#95bd3c"/><path d="M43 20 C40 26 39 32 40 40" stroke="#7a4a18" stroke-width="1.6" fill="none"/><path d="M17 16 C22 16 25 22 25 28 L26 42 C26 50 30 54 31 58 L14 58 C10 50 8 40 10 30 C11 22 13 16 17 16Z" fill="#f7c39c"/><path d="M67 16 C62 16 59 22 59 28 L58 42 C58 50 54 54 53 58 L70 58 C74 50 76 40 74 30 C73 22 71 16 67 16Z" fill="#f7c39c"/><path d="M21 28 V40 M63 28 V40" stroke="#e8a080" stroke-width="1.2"/><rect x="12" y="58" width="19" height="11" fill="#8db73b"/><rect x="51" y="58" width="19" height="11" fill="#8db73b"/><rect x="13" y="70" width="17" height="3" fill="#e8e4e8"/><rect x="52" y="70" width="17" height="3" fill="#e8e4e8"/></svg>
<svg class="abs" style="left:695px;top:380px;" width="102" height="100" viewBox="0 0 102 100"><path d="M34 14 C20 22 12 36 11 58" fill="none" stroke="#f2a02e" stroke-width="2.4"/><path d="M31 24 C22 32 18 42 18 56" fill="none" stroke="#f2a02e" stroke-width="2.4"/><path d="M68 14 C82 22 90 36 91 58" fill="none" stroke="#f2a02e" stroke-width="2.4"/><path d="M71 24 C80 32 84 42 84 56" fill="none" stroke="#f2a02e" stroke-width="2.4"/><path d="M36 12 H67 L69 28 V48 L50 60 L35 48 V28Z" fill="#f6a233"/><path d="M13 80 L32 48 C40 44 50 46 54 56 L53 80 C46 88 36 92 28 94Z" fill="#f9b565"/><path d="M89 80 L70 48 C62 44 52 46 48 56 L49 80 C56 88 66 92 74 94Z" fill="#fbc27c"/><path d="M40 52 L50 66 M46 50 L54 62" stroke="#f5a850" stroke-width="1"/><rect x="40" y="2" width="27" height="10" fill="#2f8fe0"/><rect x="-13" y="-5" width="26" height="11" fill="#2f8fe0" transform="translate(15,88) rotate(40)"/><rect x="-13" y="-5" width="26" height="11" fill="#2f8fe0" transform="translate(88,86) rotate(-40)"/><path d="M51 86 L44 96 H58Z" fill="#fff"/><rect x="47" y="95" width="9" height="2" fill="#f2a02e"/><rect x="50" y="89" width="2.5" height="2.5" fill="#f2a02e"/></svg>
<svg class="abs" style="left:830px;top:421px;" width="50" height="38" viewBox="0 0 50 38"><path d="M2 28 C2 14 14 8 30 8 L30 0 L48 13 L32 27 L32 20 C22 20 18 24 16 34 L14 36 C8 34 2 32 2 28Z" fill="#f0a61c"/><path d="M1 25 C1 12 14 6 28 6 L28 -1 L46 11 L30 24 L30 17 C20 17 15 21 13 32 C6 32 1 30 1 25Z" fill="#f6bb22"/></svg>
<svg class="abs" style="left:908px;top:395px;" width="74" height="68" viewBox="0 0 74 68"><path d="M36 3 H51 M28 11 H35" stroke="#d8df80" stroke-width="1.6" fill="none"/><path d="M38 2 L66 2 M50 2 L72 20" stroke="#d8df80" stroke-width="1.6" fill="none"/><path d="M1 52 V63 H28" stroke="#d8df80" stroke-width="1.6" fill="none"/><path d="M7 33 L23 17 L38 33 V59 H7Z" fill="#e4e3e8"/><path d="M38 33 H67 V59 H38Z" fill="#d1d0d8"/><path d="M1 35 L22 13 L33 24 L70 24 L70 35 L38 35 L23 20 L4 38Z" fill="#31a3e4"/><path d="M24 14 L37 26 H70 L56 14Z" fill="#5bbce9" opacity=".7"/><path d="M26 8 H46 L67 26 H46Z" fill="#8dbb3c"/><path d="M34 8 H40 L61 26 H55Z" fill="#6aa038"/><rect x="16" y="39" width="12" height="20" fill="#a8c23c"/><circle cx="20" cy="49" r="1.3" fill="#333"/><rect x="44" y="41" width="16" height="11" fill="#c7d45a"/><rect x="52" y="41" width="8" height="11" fill="#6aa540"/></svg>
<svg class="abs" style="left:914px;top:490px;" width="72" height="80" viewBox="0 0 72 80"><circle cx="34" cy="31" r="24" fill="#cfe9f9"/><path d="M21 51 A24 24 0 1 1 46 52" fill="none" stroke="#2a9ad8" stroke-width="2.2"/><path d="M34 17 C40 22 45 28 44 36 C43 44 38 48 34 50 C29 48 24 44 24 36 C24 28 28 22 34 17Z" fill="#6ea845"/><path d="M34 18 V50 M34 28 L28 24 M34 36 L27 31 M34 33 L40 28 M34 42 L40 38" stroke="#2d6a25" stroke-width="1.8"/><path d="M34 50 V57 C34 59 32 60 30 60 L7 62 C2 62 2 69 7 69 L38 69" fill="none" stroke="#2a9ad8" stroke-width="2"/><rect x="37" y="61" width="18" height="14" fill="#73ab48"/><rect x="37" y="61" width="5" height="14" fill="#2d6a25"/><rect x="33" y="65" width="4" height="5" fill="#b8d870"/><rect x="55" y="63" width="11" height="2" fill="#d8d0c8"/><rect x="55" y="71" width="11" height="2" fill="#d8d0c8"/><rect x="6" y="75" width="18" height="2" fill="#cde6f6"/></svg>
<svg class="abs" style="left:944px;top:632px;" width="54" height="54" viewBox="0 0 54 54"><defs><clipPath id="hc"><circle cx="27" cy="26.5" r="25"/></clipPath></defs><circle cx="27" cy="26.5" r="26.5" fill="#fff"/><circle cx="27" cy="26.5" r="25" fill="#1f7b2b"/><g clip-path="url(#hc)"><path d="M23.5 1 L30.5 1 L51 40 H3Z" fill="#fff"/><rect x="0" y="25" width="54" height="19" fill="#fff"/></g></svg>
<div class="t" style="left:952px;top:658px;font-size:9px;color:#111;font-weight:bold;letter-spacing:-0.2px;transform:scaleX(1.12);transform-origin:0 0">HABITAT</div>
<div class="abs" style="left:953px;top:668px;width:37px;height:1px;background:#666;"></div>
<div class="abs" style="left:963px;top:672px;width:16px;height:1px;background:#888;"></div>
<div class="abs" style="left:198px;top:161px;width:106px;height:567px;overflow:hidden">
<div class="abs" style="left:-198px;top:-161px;width:1276px;height:747px">
<div class="abs" style="left:228px;top:177px;width:58px;height:44px;background:linear-gradient(#fff 0%,#fffdf9 35%,#fdf0d8 75%,#fde8c4 100%);box-shadow:0 0 0 1px #cfcfcf"></div>
<div class="abs" style="left:229px;top:179px;width:1.6px;height:41px;background:#4a3228;"></div>
<div class="abs" style="left:232px;top:180px;width:9px;height:6.5px;background:#22379a;"></div>
<div class="abs" style="left:232px;top:187.5px;width:9px;height:1px;background:#bbb;"></div>
<svg class="abs" style="left:272px;top:181px;" width="10" height="6" viewBox="0 0 10 6"><path d="M0 1.5 Q3 0 5 3 T10 1" fill="none" stroke="#c89080" stroke-width="0.9"/><path d="M0 4 H5" stroke="#bbb" stroke-width="0.7"/></svg>
<div class="abs" style="left:232px;top:214px;width:8px;height:2.5px;background:#a88088;"></div>
<div class="abs" style="left:277px;top:213px;width:4px;height:4px;border-radius:50%;background:#6aaa50"></div>
<div class="abs" style="left:246px;top:196px;width:30px;height:1px;background:#c8c0b8;"></div>
<div class="abs" style="left:248px;top:199px;width:26px;height:1px;background:#b0a8a0;"></div>
<div class="abs" style="left:253px;top:202px;width:16px;height:1px;background:#d0d0d0;"></div>
<div class="abs" style="left:244px;top:215.5px;width:28px;height:1.5px;background:#a09080;"></div>
<div class="t" style="left:209px;top:176px;font-size:12px;color:#5a5a5a;-webkit-text-stroke:0.3px #5a5a5a">1</div>
<div class="abs" style="left:228px;top:237px;width:58px;height:44px;background:linear-gradient(#fff 0%,#fffdf9 35%,#fdf0d8 75%,#fde8c4 100%);box-shadow:0 0 0 1px #cfcfcf"></div>
<div class="abs" style="left:229px;top:239px;width:1.6px;height:41px;background:#4a3228;"></div>
<div class="abs" style="left:232px;top:240px;width:9px;height:6.5px;background:#22379a;"></div>
<div class="abs" style="left:232px;top:247.5px;width:9px;height:1px;background:#bbb;"></div>
<svg class="abs" style="left:272px;top:241px;" width="10" height="6" viewBox="0 0 10 6"><path d="M0 1.5 Q3 0 5 3 T10 1" fill="none" stroke="#c89080" stroke-width="0.9"/><path d="M0 4 H5" stroke="#bbb" stroke-width="0.7"/></svg>
<div class="abs" style="left:232px;top:274px;width:8px;height:2.5px;background:#a88088;"></div>
<div class="abs" style="left:277px;top:273px;width:4px;height:4px;border-radius:50%;background:#6aaa50"></div>
<div class="abs" style="left:236px;top:250.0px;width:38px;height:1px;background:#a0a0a0;"></div>
<div class="abs" style="left:236px;top:252.5px;width:38px;height:1px;background:#a0a0a0;"></div>
<div class="abs" style="left:236px;top:255.0px;width:38px;height:1px;background:#a0a0a0;"></div>
<div class="abs" style="left:236px;top:257.5px;width:38px;height:1px;background:#a0a0a0;"></div>
<div class="abs" style="left:236px;top:260.0px;width:38px;height:1px;background:#a0a0a0;"></div>
<div class="abs" style="left:236px;top:264px;width:28px;height:1px;background:#c0c0c0;"></div>
<div class="abs" style="left:236px;top:267px;width:28px;height:1px;background:#c0c0c0;"></div>
<div class="abs" style="left:236px;top:270px;width:28px;height:1px;background:#c0c0c0;"></div>
<div class="abs" style="left:236px;top:274px;width:20px;height:1px;background:#aaa;"></div>
<div class="t" style="left:209px;top:236px;font-size:12px;color:#5a5a5a;-webkit-text-stroke:0.3px #5a5a5a">2</div>
<div class="abs" style="left:225px;top:295px;width:64px;height:49px;background:#cf5130;"></div>
<div class="abs" style="left:228px;top:297px;width:58px;height:44px;background:#fff;"></div>
<div class="abs" style="left:0;top:0;width:1276px;height:747px;transform:translate(201.063px,283.006px) scale(0.08089);transform-origin:0 0">
<div class="abs" style="left:333px;top:173px;width:717px;height:538px;background:linear-gradient(to bottom,#ffffff 0%,#fffefb 22%,#fffaf3 45%,#fef4df 68%,#fdedca 86%,#fde8ba 100%);box-shadow:0 0 0 1px #d2d2d2"></div>
<div class="abs" style="left:333px;top:173px;width:14.8px;height:538px;background:#573d30;"></div>
<svg class="abs" style="left:333px;top:173px;" width="717" height="538" viewBox="0 0 717 538"><g fill="none" transform="translate(-333,-173)"><path d="M488 283 C445 335 395 435 378 560" stroke="#d6d0ca" stroke-width="1"/><path d="M349 470 C358 560 370 630 392 712" stroke="#d9c7a8" stroke-width="1.1"/><path d="M357 540 C366 600 380 660 398 712" stroke="#e2d2b4" stroke-width="1"/><path d="M374 274 C368 360 360 440 368 514 C374 580 392 640 419 712" stroke="#4a3528" stroke-width="1.5"/><path d="M347 375 C352 440 368 520 386 600 C394 640 400 680 407 712" stroke="#4a3528" stroke-width="2"/><path d="M487 418 C445 472 401 540 396 640" stroke="#4a3528" stroke-width="1.3"/></g></svg>
<svg class="abs" style="left:395px;top:191px;" width="90" height="61" viewBox="0 0 90 61"><rect width="90" height="61" fill="#03369c"/><polygon points="45.00,8.90 45.65,10.61 47.47,10.70 46.05,11.84 46.53,13.60 45.00,12.60 43.47,13.60 43.95,11.84 42.53,10.70 44.35,10.61" fill="#f2d038"/><polygon points="54.75,11.51 55.40,13.22 57.22,13.31 55.80,14.45 56.28,16.22 54.75,15.21 53.22,16.22 53.70,14.45 52.28,13.31 54.10,13.22" fill="#f2d038"/><polygon points="61.89,18.65 62.53,20.36 64.36,20.45 62.93,21.59 63.42,23.35 61.89,22.35 60.36,23.35 60.84,21.59 59.41,20.45 61.24,20.36" fill="#f2d038"/><polygon points="64.50,28.40 65.15,30.11 66.97,30.20 65.55,31.34 66.03,33.10 64.50,32.10 62.97,33.10 63.45,31.34 62.03,30.20 63.85,30.11" fill="#f2d038"/><polygon points="61.89,38.15 62.53,39.86 64.36,39.95 62.93,41.09 63.42,42.85 61.89,41.85 60.36,42.85 60.84,41.09 59.41,39.95 61.24,39.86" fill="#f2d038"/><polygon points="54.75,45.29 55.40,47.00 57.22,47.08 55.80,48.23 56.28,49.99 54.75,48.99 53.22,49.99 53.70,48.23 52.28,47.08 54.10,47.00" fill="#f2d038"/><polygon points="45.00,47.90 45.65,49.61 47.47,49.70 46.05,50.84 46.53,52.60 45.00,51.60 43.47,52.60 43.95,50.84 42.53,49.70 44.35,49.61" fill="#f2d038"/><polygon points="35.25,45.29 35.90,47.00 37.72,47.08 36.30,48.23 36.78,49.99 35.25,48.99 33.72,49.99 34.20,48.23 32.78,47.08 34.60,47.00" fill="#f2d038"/><polygon points="28.11,38.15 28.76,39.86 30.59,39.95 29.16,41.09 29.64,42.85 28.11,41.85 26.58,42.85 27.07,41.09 25.64,39.95 27.47,39.86" fill="#f2d038"/><polygon points="25.50,28.40 26.15,30.11 27.97,30.20 26.55,31.34 27.03,33.10 25.50,32.10 23.97,33.10 24.45,31.34 23.03,30.20 24.85,30.11" fill="#f2d038"/><polygon points="28.11,18.65 28.76,20.36 30.59,20.45 29.16,21.59 29.64,23.35 28.11,22.35 26.58,23.35 27.07,21.59 25.64,20.45 27.47,20.36" fill="#f2d038"/><polygon points="35.25,11.51 35.90,13.22 37.72,13.31 36.30,14.45 36.78,16.22 35.25,15.21 33.72,16.22 34.20,14.45 32.78,13.31 34.60,13.22" fill="#f2d038"/></svg>
<div class="t" style="left:396px;top:258px;font-size:10px;color:#2a2a2a;letter-spacing:-0.15px">Proiect finantat de</div>
<div class="t" style="left:396px;top:269.5px;font-size:10px;color:#2a2a2a;letter-spacing:-0.15px">Uniunea Europeană</div>
<svg class="abs" style="left:432px;top:267px;" width="32" height="3" viewBox="0 0 32 3"><path d="M0 1.5 Q1 0 2 1.5 T4 1.5 T6 1.5 T8 1.5 T10 1.5 T12 1.5 T14 1.5 T16 1.5 T18 1.5 T20 1.5 T22 1.5 T24 1.5 T26 1.5 T28 1.5" fill="none" stroke="#e05050" stroke-width="0.6"/></svg>
<div class="t" style="left:383px;top:335.5px;font-size:29px;color:#5a4642;letter-spacing:0.6px;transform:scaleX(1.163);transform-origin:0 0;-webkit-text-stroke:0.3px #fffcf6">Obiectivul general:</div>
<div class="t" style="left:395px;top:385.00px;width:261px;font-size:13.6px;color:#4a4642;text-align:justify;text-align-last:justify">Să contribuim la consolidarea unui</div>
<div class="t" style="left:395px;top:400.37px;width:261px;font-size:13.6px;color:#4a4642;text-align:justify;text-align-last:justify">proces decizional mai participativ,</div>
<div class="t" style="left:395px;top:415.74px;width:261px;font-size:13.6px;color:#4a4642;text-align:justify;text-align-last:justify">transparent și mai responsabil, în special</div>
<div class="t" style="left:395px;top:431.11px;width:261px;font-size:13.6px;color:#4a4642;text-align:justify;text-align-last:justify">la nivel local, prin implicarea societății</div>
<div class="t" style="left:395px;top:446.48px;width:261px;font-size:13.6px;color:#4a4642;text-align:justify;text-align-last:justify">civile în activități de monitorizare,</div>
<div class="t" style="left:395px;top:461.85px;width:261px;font-size:13.6px;color:#4a4642;text-align:justify;text-align-last:justify">precum și prin promovarea principiilor</div>
<div class="t" style="left:395px;top:477.22px;font-size:13.6px;color:#4a4642;">dezvoltării durabile și a valorilor UE.</div>
<div class="abs" style="left:376px;top:635px;width:124px;height:45px;background:#ffffff;"></div>
<div class="abs" style="left:384px;top:643px;width:108px;height:28px;background:#8a1d40;"></div>
<div class="t" style="left:389px;top:640.8px;font-size:31.6px;color:#ffffff;font-weight:bold;letter-spacing:0.4px;transform:scaleX(1.08);transform-origin:0 0">AGER</div>
<svg class="abs" style="left:898px;top:196px;" width="104" height="38" viewBox="0 0 104 38"><defs><linearGradient id="gk" x1="0" x2="1" y1="0" y2="0"><stop offset="0.45" stop-color="#2a2a2a"/><stop offset="0.72" stop-color="#5a5048"/></linearGradient><linearGradient id="gr" x1="0" x2="1"><stop offset="0.45" stop-color="#d42e2e"/><stop offset="0.72" stop-color="#5a5048"/></linearGradient><linearGradient id="gy" x1="0" x2="1"><stop offset="0.45" stop-color="#f2c21e"/><stop offset="0.72" stop-color="#5a5048"/></linearGradient></defs><polygon points="1.1,5.6 3.1,4.9 5.1,4.3 7.2,3.6 9.2,2.9 11.2,2.3 13.3,1.8 15.4,1.5 17.5,1.2 19.6,0.9 21.7,0.6 23.9,0.3 25.9,0.7 28.0,1.1 30.1,1.6 32.2,2.0 34.2,2.7 36.2,3.5 38.2,4.3 40.1,5.1 41.9,6.3 43.7,7.4 45.4,8.6 47.2,9.9 48.8,11.2 50.5,12.5 52.2,13.9 53.7,15.3 55.3,16.8 56.8,18.3 58.3,19.8 59.8,21.3 61.4,22.7 63.2,23.8 65.1,24.7 67.1,25.4 69.2,25.7 71.4,26.0 73.5,25.8 75.6,25.6 76.0,29.4 73.9,29.5 71.8,29.6 69.7,29.4 67.6,29.2 65.7,28.5 63.7,27.7 61.9,26.8 60.3,25.4 58.9,23.9 57.4,22.4 55.9,20.9 54.4,19.4 52.9,18.0 51.3,16.6 49.6,15.4 47.9,14.1 46.2,12.9 44.5,11.8 42.7,10.7 40.9,9.6 38.9,8.8 36.9,8.2 35.0,7.5 33.0,6.9 30.9,6.5 28.8,6.2 26.8,5.8 24.7,5.6 22.6,5.7 20.6,6.1 18.5,6.5 16.5,6.9 14.4,7.4 12.4,7.9 10.5,8.7 8.6,9.5 6.6,10.3 4.7,11.1 2.8,12.0" fill="url(#gk)"/><polygon points="2.7,11.6 4.6,10.8 6.6,10.0 8.5,9.2 10.4,8.3 12.3,7.6 14.4,7.1 16.4,6.6 18.5,6.2 20.5,5.8 22.6,5.4 24.7,5.3 26.7,5.5 28.8,5.9 30.9,6.2 32.9,6.7 34.9,7.2 36.9,7.9 38.9,8.6 40.8,9.4 42.6,10.5 44.4,11.5 46.2,12.7 47.9,13.9 49.6,15.1 51.2,16.4 52.8,17.8 54.4,19.2 55.9,20.7 57.4,22.1 58.8,23.6 60.3,25.2 61.9,26.5 63.7,27.5 65.6,28.3 67.6,29.0 69.7,29.2 71.8,29.4 73.9,29.3 76.0,29.2 76.4,32.9 74.3,33.0 72.2,33.0 70.2,32.8 68.1,32.6 66.1,32.0 64.2,31.3 62.3,30.5 60.8,29.1 59.4,27.6 58.0,26.1 56.5,24.6 55.0,23.2 53.5,21.8 52.0,20.4 50.4,19.1 48.7,18.0 46.9,16.8 45.2,15.7 43.4,14.8 41.5,13.8 39.6,13.0 37.6,12.5 35.7,11.9 33.7,11.4 31.6,11.0 29.6,10.8 27.5,10.5 25.5,10.3 23.4,10.3 21.4,10.9 19.4,11.4 17.4,11.9 15.5,12.4 13.5,13.0 11.6,13.9 9.8,14.9 8.0,15.9 6.2,16.8 4.4,17.8" fill="url(#gr)"/><polygon points="4.3,17.5 6.1,16.5 7.9,15.5 9.7,14.6 11.6,13.6 13.4,12.7 15.4,12.1 17.4,11.6 19.4,11.1 21.4,10.6 23.4,10.1 25.4,10.1 27.5,10.2 29.5,10.5 31.6,10.7 33.6,11.2 35.6,11.7 37.6,12.2 39.6,12.8 41.5,13.6 43.3,14.5 45.1,15.5 46.9,16.6 48.6,17.7 50.3,18.9 52.0,20.2 53.5,21.5 55.0,23.0 56.5,24.4 58.0,25.9 59.4,27.4 60.8,28.9 62.3,30.3 64.2,31.1 66.1,31.8 68.1,32.4 70.1,32.6 72.2,32.8 74.3,32.8 76.3,32.7 76.7,36.2 74.7,36.2 72.6,36.1 70.6,36.0 68.6,35.8 66.6,35.3 64.7,34.7 62.7,34.0 61.3,32.5 59.9,31.1 58.5,29.6 57.1,28.1 55.6,26.7 54.1,25.3 52.7,23.9 51.0,22.7 49.3,21.6 47.6,20.5 45.9,19.4 44.0,18.6 42.2,17.8 40.3,16.9 38.3,16.5 36.3,16.1 34.3,15.7 32.3,15.3 30.3,15.1 28.3,15.0 26.2,14.8 24.2,14.7 22.2,15.3 20.3,16.0 18.4,16.6 16.4,17.2 14.5,17.8 12.7,18.8 11.0,20.0 9.3,21.1 7.6,22.2 5.9,23.3" fill="url(#gy)"/><path d="M74 25.5 L98.5 6.5 L101 25 L76 36.5Z" fill="#5a6a80"/><path d="M77 23.2 L87 15.5 L89.5 31 L79 36Z" fill="#f2c62a"/><path d="M86.5 16 L99 6.2 L102.3 24.5 L89 30.8Z" fill="#d83434"/><circle cx="83" cy="26" r="2.8" fill="#9a6a28"/></svg>
<div class="t" style="left:904px;top:229px;font-size:8.5px;color:#444;font-weight:bold;letter-spacing:0.2px">cooperare</div>
<div class="t" style="left:903px;top:235px;font-size:13.5px;color:#555;font-family:Liberation Serif,serif;letter-spacing:0px">germană</div>
<div class="t" style="left:904px;top:251px;font-size:4.2px;color:#c08080;letter-spacing:0.35px">DEUTSCHE ZUSAMMENARBEIT</div>
<svg class="abs" style="left:905px;top:305px;" width="80" height="75" viewBox="0 0 80 75"><path d="M5 18 C2 28 2 38 6 47" fill="none" stroke="#d8df90" stroke-width="1.6"/><path d="M75 56 V72" stroke="#d8df90" stroke-width="1.6"/><ellipse cx="42" cy="28" rx="25" ry="26" fill="#239be2"/><path d="M30 6 C36 4 46 4 52 6" stroke="#7fc7f2" stroke-width="1.5" fill="none"/><path d="M33 28 C33 20 40 14 52 14 C50 26 44 36 37 36 C34 35 33 32 33 28Z" fill="#95bd3c"/><path d="M43 20 C40 26 39 32 40 40" stroke="#7a4a18" stroke-width="1.6" fill="none"/><path d="M17 16 C22 16 25 22 25 28 L26 42 C26 50 30 54 31 58 L14 58 C10 50 8 40 10 30 C11 22 13 16 17 16Z" fill="#f7c39c"/><path d="M67 16 C62 16 59 22 59 28 L58 42 C58 50 54 54 53 58 L70 58 C74 50 76 40 74 30 C73 22 71 16 67 16Z" fill="#f7c39c"/><path d="M21 28 V40 M63 28 V40" stroke="#e8a080" stroke-width="1.2"/><rect x="12" y="58" width="19" height="11" fill="#8db73b"/><rect x="51" y="58" width="19" height="11" fill="#8db73b"/><rect x="13" y="70" width="17" height="3" fill="#e8e4e8"/><rect x="52" y="70" width="17" height="3" fill="#e8e4e8"/></svg>
<svg class="abs" style="left:695px;top:380px;" width="102" height="100" viewBox="0 0 102 100"><path d="M34 14 C20 22 12 36 11 58" fill="none" stroke="#f2a02e" stroke-width="2.4"/><path d="M31 24 C22 32 18 42 18 56" fill="none" stroke="#f2a02e" stroke-width="2.4"/><path d="M68 14 C82 22 90 36 91 58" fill="none" stroke="#f2a02e" stroke-width="2.4"/><path d="M71 24 C80 32 84 42 84 56" fill="none" stroke="#f2a02e" stroke-width="2.4"/><path d="M36 12 H67 L69 28 V48 L50 60 L35 48 V28Z" fill="#f6a233"/><path d="M13 80 L32 48 C40 44 50 46 54 56 L53 80 C46 88 36 92 28 94Z" fill="#f9b565"/><path d="M89 80 L70 48 C62 44 52 46 48 56 L49 80 C56 88 66 92 74 94Z" fill="#fbc27c"/><path d="M40 52 L50 66 M46 50 L54 62" stroke="#f5a850" stroke-width="1"/><rect x="40" y="2" width="27" height="10" fill="#2f8fe0"/><rect x="-13" y="-5" width="26" height="11" fill="#2f8fe0" transform="translate(15,88) rotate(40)"/><rect x="-13" y="-5" width="26" height="11" fill="#2f8fe0" transform="translate(88,86) rotate(-40)"/><path d="M51 86 L44 96 H58Z" fill="#fff"/><rect x="47" y="95" width="9" height="2" fill="#f2a02e"/><rect x="50" y="89" width="2.5" height="2.5" fill="#f2a02e"/></svg>
<svg class="abs" style="left:830px;top:421px;" width="50" height="38" viewBox="0 0 50 38"><path d="M2 28 C2 14 14 8 30 8 L30 0 L48 13 L32 27 L32 20 C22 20 18 24 16 34 L14 36 C8 34 2 32 2 28Z" fill="#f0a61c"/><path d="M1 25 C1 12 14 6 28 6 L28 -1 L46 11 L30 24 L30 17 C20 17 15 21 13 32 C6 32 1 30 1 25Z" fill="#f6bb22"/></svg>
<svg class="abs" style="left:908px;top:395px;" width="74" height="68" viewBox="0 0 74 68"><path d="M36 3 H51 M28 11 H35" stroke="#d8df80" stroke-width="1.6" fill="none"/><path d="M38 2 L66 2 M50 2 L72 20" stroke="#d8df80" stroke-width="1.6" fill="none"/><path d="M1 52 V63 H28" stroke="#d8df80" stroke-width="1.6" fill="none"/><path d="M7 33 L23 17 L38 33 V59 H7Z" fill="#e4e3e8"/><path d="M38 33 H67 V59 H38Z" fill="#d1d0d8"/><path d="M1 35 L22 13 L33 24 L70 24 L70 35 L38 35 L23 20 L4 38Z" fill="#31a3e4"/><path d="M24 14 L37 26 H70 L56 14Z" fill="#5bbce9" opacity=".7"/><path d="M26 8 H46 L67 26 H46Z" fill="#8dbb3c"/><path d="M34 8 H40 L61 26 H55Z" fill="#6aa038"/><rect x="16" y="39" width="12" height="20" fill="#a8c23c"/><circle cx="20" cy="49" r="1.3" fill="#333"/><rect x="44" y="41" width="16" height="11" fill="#c7d45a"/><rect x="52" y="41" width="8" height="11" fill="#6aa540"/></svg>
<svg class="abs" style="left:914px;top:490px;" width="72" height="80" viewBox="0 0 72 80"><circle cx="34" cy="31" r="24" fill="#cfe9f9"/><path d="M21 51 A24 24 0 1 1 46 52" fill="none" stroke="#2a9ad8" stroke-width="2.2"/><path d="M34 17 C40 22 45 28 44 36 C43 44 38 48 34 50 C29 48 24 44 24 36 C24 28 28 22 34 17Z" fill="#6ea845"/><path d="M34 18 V50 M34 28 L28 24 M34 36 L27 31 M34 33 L40 28 M34 42 L40 38" stroke="#2d6a25" stroke-width="1.8"/><path d="M34 50 V57 C34 59 32 60 30 60 L7 62 C2 62 2 69 7 69 L38 69" fill="none" stroke="#2a9ad8" stroke-width="2"/><rect x="37" y="61" width="18" height="14" fill="#73ab48"/><rect x="37" y="61" width="5" height="14" fill="#2d6a25"/><rect x="33" y="65" width="4" height="5" fill="#b8d870"/><rect x="55" y="63" width="11" height="2" fill="#d8d0c8"/><rect x="55" y="71" width="11" height="2" fill="#d8d0c8"/><rect x="6" y="75" width="18" height="2" fill="#cde6f6"/></svg>
<svg class="abs" style="left:944px;top:632px;" width="54" height="54" viewBox="0 0 54 54"><defs><clipPath id="hc"><circle cx="27" cy="26.5" r="25"/></clipPath></defs><circle cx="27" cy="26.5" r="26.5" fill="#fff"/><circle cx="27" cy="26.5" r="25" fill="#1f7b2b"/><g clip-path="url(#hc)"><path d="M23.5 1 L30.5 1 L51 40 H3Z" fill="#fff"/><rect x="0" y="25" width="54" height="19" fill="#fff"/></g></svg>
<div class="t" style="left:952px;top:658px;font-size:9px;color:#111;font-weight:bold;letter-spacing:-0.2px;transform:scaleX(1.12);transform-origin:0 0">HABITAT</div>
<div class="abs" style="left:953px;top:668px;width:37px;height:1px;background:#666;"></div>
<div class="abs" style="left:963px;top:672px;width:16px;height:1px;background:#888;"></div>
</div>
<div class="abs" style="left:232px;top:311px;width:23.5px;height:1.4px;background:#8a7872;"></div>
<div class="abs" style="left:233px;top:315.0px;width:21px;height:0.9px;background:#a8a8a8;"></div>
<div class="abs" style="left:233px;top:316.6px;width:21px;height:0.9px;background:#a8a8a8;"></div>
<div class="abs" style="left:233px;top:318.2px;width:21px;height:0.9px;background:#a8a8a8;"></div>
<div class="abs" style="left:233px;top:319.8px;width:21px;height:0.9px;background:#a8a8a8;"></div>
<div class="abs" style="left:233px;top:321.4px;width:12px;height:0.9px;background:#a8a8a8;"></div>
<div class="abs" style="left:232px;top:335px;width:9px;height:2.2px;background:#9a6a7a;"></div>
<div class="t" style="left:209px;top:296px;font-size:12px;color:#c8502c;-webkit-text-stroke:0.3px #c8502c">3</div>
<div class="abs" style="left:228px;top:357px;width:58px;height:44px;background:linear-gradient(#fff 0%,#fffdf9 35%,#fdf0d8 75%,#fde8c4 100%);box-shadow:0 0 0 1px #cfcfcf"></div>
<div class="abs" style="left:229px;top:359px;width:1.6px;height:41px;background:#4a3228;"></div>
<div class="abs" style="left:232px;top:360px;width:9px;height:6.5px;background:#22379a;"></div>
<div class="abs" style="left:232px;top:367.5px;width:9px;height:1px;background:#bbb;"></div>
<svg class="abs" style="left:272px;top:361px;" width="10" height="6" viewBox="0 0 10 6"><path d="M0 1.5 Q3 0 5 3 T10 1" fill="none" stroke="#c89080" stroke-width="0.9"/><path d="M0 4 H5" stroke="#bbb" stroke-width="0.7"/></svg>
<div class="abs" style="left:232px;top:394px;width:8px;height:2.5px;background:#a88088;"></div>
<div class="abs" style="left:277px;top:393px;width:4px;height:4px;border-radius:50%;background:#6aaa50"></div>
<div class="abs" style="left:250px;top:373px;width:16px;height:1px;background:#c8c8c8;"></div>
<div class="abs" style="left:254px;top:376px;width:8px;height:1px;background:#ccc;"></div>
<div class="abs" style="left:242px;top:384px;width:32px;height:1px;background:#c8c8c8;"></div>
<div class="abs" style="left:242px;top:389px;width:32px;height:1px;background:#999;"></div>
<div class="abs" style="left:242px;top:395px;width:32px;height:1px;background:#c8c8c8;"></div>
<div class="t" style="left:209px;top:356px;font-size:12px;color:#5a5a5a;-webkit-text-stroke:0.3px #5a5a5a">4</div>
<svg class="abs" style="left:207px;top:371px;" width="9" height="9" viewBox="0 0 9 9"><path d="M4.5 0 L5.6 3.3 L9 3.4 L6.3 5.5 L7.3 8.8 L4.5 6.8 L1.7 8.8 L2.7 5.5 L0 3.4 L3.4 3.3Z" fill="#5a5a5a" transform="scale(.9)"/></svg>
<div class="abs" style="left:228px;top:417px;width:58px;height:44px;background:linear-gradient(#fff 0%,#fffdf9 35%,#fdf0d8 75%,#fde8c4 100%);box-shadow:0 0 0 1px #cfcfcf"></div>
<div class="abs" style="left:229px;top:419px;width:1.6px;height:41px;background:#4a3228;"></div>
<div class="abs" style="left:232px;top:420px;width:9px;height:6.5px;background:#22379a;"></div>
<div class="abs" style="left:232px;top:427.5px;width:9px;height:1px;background:#bbb;"></div>
<svg class="abs" style="left:272px;top:421px;" width="10" height="6" viewBox="0 0 10 6"><path d="M0 1.5 Q3 0 5 3 T10 1" fill="none" stroke="#c89080" stroke-width="0.9"/><path d="M0 4 H5" stroke="#bbb" stroke-width="0.7"/></svg>
<div class="abs" style="left:232px;top:454px;width:8px;height:2.5px;background:#a88088;"></div>
<div class="abs" style="left:277px;top:453px;width:4px;height:4px;border-radius:50%;background:#6aaa50"></div>
<div class="abs" style="left:252px;top:433px;width:12px;height:1px;background:#ccc;"></div>
<div class="abs" style="left:236px;top:439px;width:8px;height:8px;border-radius:50%;border:2px dotted #f0b040"></div>
<div class="abs" style="left:246px;top:439px;width:8px;height:8px;border-radius:50%;border:2px dotted #a06040"></div>
<div class="abs" style="left:256px;top:439px;width:8px;height:8px;border-radius:50%;border:2px dotted #c09070"></div>
<div class="abs" style="left:266px;top:439px;width:8px;height:8px;border-radius:50%;border:2px dotted #b08060"></div>
<div class="t" style="left:209px;top:416px;font-size:12px;color:#5a5a5a;-webkit-text-stroke:0.3px #5a5a5a">5</div>
<svg class="abs" style="left:207px;top:431px;" width="9" height="9" viewBox="0 0 9 9"><path d="M4.5 0 L5.6 3.3 L9 3.4 L6.3 5.5 L7.3 8.8 L4.5 6.8 L1.7 8.8 L2.7 5.5 L0 3.4 L3.4 3.3Z" fill="#5a5a5a" transform="scale(.9)"/></svg>
<div class="abs" style="left:228px;top:477px;width:58px;height:44px;background:linear-gradient(#fff 0%,#fffdf9 35%,#fdf0d8 75%,#fde8c4 100%);box-shadow:0 0 0 1px #cfcfcf"></div>
<div class="abs" style="left:229px;top:479px;width:1.6px;height:41px;background:#4a3228;"></div>
<div class="abs" style="left:232px;top:480px;width:9px;height:6.5px;background:#22379a;"></div>
<div class="abs" style="left:232px;top:487.5px;width:9px;height:1px;background:#bbb;"></div>
<svg class="abs" style="left:272px;top:481px;" width="10" height="6" viewBox="0 0 10 6"><path d="M0 1.5 Q3 0 5 3 T10 1" fill="none" stroke="#c89080" stroke-width="0.9"/><path d="M0 4 H5" stroke="#bbb" stroke-width="0.7"/></svg>
<div class="abs" style="left:232px;top:514px;width:8px;height:2.5px;background:#a88088;"></div>
<div class="abs" style="left:277px;top:513px;width:4px;height:4px;border-radius:50%;background:#6aaa50"></div>
<div class="abs" style="left:246px;top:493px;width:22px;height:1px;background:#ccc;"></div>
<div class="abs" style="left:254px;top:497px;width:6px;height:1px;background:#bbb;"></div>
<div class="abs" style="left:238px;top:490px;width:6px;height:1px;background:#aaa;"></div>
<div class="abs" style="left:236px;top:494px;width:12px;height:1px;background:#c8c8c8;"></div>
<div class="abs" style="left:236px;top:496px;width:12px;height:1px;background:#c8c8c8;"></div>
<div class="abs" style="left:254px;top:490px;width:6px;height:1px;background:#aaa;"></div>
<div class="abs" style="left:252px;top:494px;width:12px;height:1px;background:#c8c8c8;"></div>
<div class="abs" style="left:252px;top:496px;width:12px;height:1px;background:#c8c8c8;"></div>
<div class="abs" style="left:270px;top:490px;width:6px;height:1px;background:#aaa;"></div>
<div class="abs" style="left:268px;top:494px;width:12px;height:1px;background:#c8c8c8;"></div>
<div class="abs" style="left:268px;top:496px;width:12px;height:1px;background:#c8c8c8;"></div>
<div class="t" style="left:209px;top:476px;font-size:12px;color:#5a5a5a;-webkit-text-stroke:0.3px #5a5a5a">6</div>
<svg class="abs" style="left:207px;top:491px;" width="9" height="9" viewBox="0 0 9 9"><path d="M4.5 0 L5.6 3.3 L9 3.4 L6.3 5.5 L7.3 8.8 L4.5 6.8 L1.7 8.8 L2.7 5.5 L0 3.4 L3.4 3.3Z" fill="#5a5a5a" transform="scale(.9)"/></svg>
<div class="abs" style="left:228px;top:537px;width:58px;height:44px;background:linear-gradient(#fff 0%,#fffdf9 35%,#fdf0d8 75%,#fde8c4 100%);box-shadow:0 0 0 1px #cfcfcf"></div>
<div class="abs" style="left:229px;top:539px;width:1.6px;height:41px;background:#4a3228;"></div>
<div class="abs" style="left:232px;top:540px;width:9px;height:6.5px;background:#22379a;"></div>
<div class="abs" style="left:232px;top:547.5px;width:9px;height:1px;background:#bbb;"></div>
<svg class="abs" style="left:272px;top:541px;" width="10" height="6" viewBox="0 0 10 6"><path d="M0 1.5 Q3 0 5 3 T10 1" fill="none" stroke="#c89080" stroke-width="0.9"/><path d="M0 4 H5" stroke="#bbb" stroke-width="0.7"/></svg>
<div class="abs" style="left:232px;top:574px;width:8px;height:2.5px;background:#a88088;"></div>
<div class="abs" style="left:277px;top:573px;width:4px;height:4px;border-radius:50%;background:#6aaa50"></div>
<div class="abs" style="left:236px;top:550px;width:18px;height:1px;background:#888;"></div>
<div class="abs" style="left:236px;top:553px;width:40px;height:1px;background:#999;"></div>
<div class="abs" style="left:236px;top:556px;width:36px;height:1px;background:#bbb;"></div>
<div class="abs" style="left:236px;top:560px;width:24px;height:1px;background:#999;"></div>
<div class="abs" style="left:236px;top:563px;width:30px;height:1px;background:#bbb;"></div>
<div class="abs" style="left:236px;top:566px;width:20px;height:1px;background:#aaa;"></div>
<div class="t" style="left:209px;top:536px;font-size:12px;color:#5a5a5a;-webkit-text-stroke:0.3px #5a5a5a">7</div>
<div class="abs" style="left:228px;top:597px;width:58px;height:44px;background:linear-gradient(#fff 0%,#fffdf9 35%,#fdf0d8 75%,#fde8c4 100%);box-shadow:0 0 0 1px #cfcfcf"></div>
<div class="abs" style="left:229px;top:599px;width:1.6px;height:41px;background:#4a3228;"></div>
<div class="abs" style="left:232px;top:600px;width:9px;height:6.5px;background:#22379a;"></div>
<div class="abs" style="left:232px;top:607.5px;width:9px;height:1px;background:#bbb;"></div>
<svg class="abs" style="left:272px;top:601px;" width="10" height="6" viewBox="0 0 10 6"><path d="M0 1.5 Q3 0 5 3 T10 1" fill="none" stroke="#c89080" stroke-width="0.9"/><path d="M0 4 H5" stroke="#bbb" stroke-width="0.7"/></svg>
<div class="abs" style="left:232px;top:634px;width:8px;height:2.5px;background:#a88088;"></div>
<div class="abs" style="left:277px;top:633px;width:4px;height:4px;border-radius:50%;background:#6aaa50"></div>
<div class="abs" style="left:236px;top:610px;width:18px;height:1px;background:#888;"></div>
<div class="abs" style="left:236px;top:613px;width:40px;height:1px;background:#999;"></div>
<div class="abs" style="left:236px;top:616px;width:36px;height:1px;background:#bbb;"></div>
<div class="abs" style="left:236px;top:620px;width:24px;height:1px;background:#999;"></div>
<div class="abs" style="left:236px;top:623px;width:30px;height:1px;background:#bbb;"></div>
<div class="abs" style="left:236px;top:626px;width:20px;height:1px;background:#aaa;"></div>
<div class="t" style="left:209px;top:596px;font-size:12px;color:#5a5a5a;-webkit-text-stroke:0.3px #5a5a5a">8</div>
<div class="abs" style="left:228px;top:657px;width:58px;height:44px;background:linear-gradient(#fff 0%,#fffdf9 35%,#fdf0d8 75%,#fde8c4 100%);box-shadow:0 0 0 1px #cfcfcf"></div>
<div class="abs" style="left:229px;top:659px;width:1.6px;height:41px;background:#4a3228;"></div>
<div class="abs" style="left:232px;top:660px;width:9px;height:6.5px;background:#22379a;"></div>
<div class="abs" style="left:232px;top:667.5px;width:9px;height:1px;background:#bbb;"></div>
<svg class="abs" style="left:272px;top:661px;" width="10" height="6" viewBox="0 0 10 6"><path d="M0 1.5 Q3 0 5 3 T10 1" fill="none" stroke="#c89080" stroke-width="0.9"/><path d="M0 4 H5" stroke="#bbb" stroke-width="0.7"/></svg>
<div class="abs" style="left:232px;top:694px;width:8px;height:2.5px;background:#a88088;"></div>
<div class="abs" style="left:277px;top:693px;width:4px;height:4px;border-radius:50%;background:#6aaa50"></div>
<div class="abs" style="left:236px;top:670px;width:18px;height:1px;background:#888;"></div>
<div class="abs" style="left:236px;top:673px;width:40px;height:1px;background:#999;"></div>
<div class="abs" style="left:236px;top:676px;width:36px;height:1px;background:#bbb;"></div>
<div class="abs" style="left:236px;top:680px;width:24px;height:1px;background:#999;"></div>
<div class="abs" style="left:236px;top:683px;width:30px;height:1px;background:#bbb;"></div>
<div class="abs" style="left:236px;top:686px;width:20px;height:1px;background:#aaa;"></div>
<div class="t" style="left:209px;top:656px;font-size:12px;color:#5a5a5a;-webkit-text-stroke:0.3px #5a5a5a">9</div>
<div class="abs" style="left:228px;top:717px;width:58px;height:44px;background:linear-gradient(#fff 0%,#fffdf9 35%,#fdf0d8 75%,#fde8c4 100%);box-shadow:0 0 0 1px #cfcfcf"></div>
<div class="abs" style="left:229px;top:719px;width:1.6px;height:41px;background:#4a3228;"></div>
<div class="abs" style="left:232px;top:720px;width:9px;height:6.5px;background:#22379a;"></div>
<div class="abs" style="left:232px;top:727.5px;width:9px;height:1px;background:#bbb;"></div>
<svg class="abs" style="left:272px;top:721px;" width="10" height="6" viewBox="0 0 10 6"><path d="M0 1.5 Q3 0 5 3 T10 1" fill="none" stroke="#c89080" stroke-width="0.9"/><path d="M0 4 H5" stroke="#bbb" stroke-width="0.7"/></svg>
<div class="abs" style="left:232px;top:754px;width:8px;height:2.5px;background:#a88088;"></div>
<div class="abs" style="left:277px;top:753px;width:4px;height:4px;border-radius:50%;background:#6aaa50"></div>
<div class="abs" style="left:236px;top:730px;width:18px;height:1px;background:#888;"></div>
<div class="abs" style="left:236px;top:733px;width:40px;height:1px;background:#999;"></div>
<div class="abs" style="left:236px;top:736px;width:36px;height:1px;background:#bbb;"></div>
<div class="abs" style="left:236px;top:740px;width:24px;height:1px;background:#999;"></div>
<div class="abs" style="left:236px;top:743px;width:30px;height:1px;background:#bbb;"></div>
<div class="abs" style="left:236px;top:746px;width:20px;height:1px;background:#aaa;"></div>
<div class="t" style="left:203px;top:716px;font-size:12px;color:#5a5a5a;-webkit-text-stroke:0.3px #5a5a5a">10</div>
</div></div>
<svg class="abs" style="left:516px;top:370px;" width="16" height="22" viewBox="0 0 16 22"><path d="M7 1 V13 M1 7 H13 M5 3 L7 1 L9 3 M5 11 L7 13 L9 11 M3 5 L1 7 L3 9 M11 5 L13 7 L11 9" fill="none" stroke="#111" stroke-width="1.1"/><path d="M8 8 V20 L10.5 17.5 L12.5 21.5 L14 20.8 L12 16.8 L15.5 16.8Z" fill="#fff" stroke="#111" stroke-width="0.9"/></svg>
<div class="abs" style="left:198px;top:744px;width:879px;height:3px;background:#2c343e;"></div>
<div class="abs" style="left:198px;top:84px;width:1px;height:660px;background:#5a3024;"></div>
<div class="abs" style="left:199px;top:84px;width:1px;height:660px;background:#f3d8cc;"></div>
<div class="abs" style="left:1074px;top:84px;width:2px;height:660px;background:#d4a596;"></div>
<div class="abs" style="left:1075px;top:30px;width:1px;height:54px;background:#d87050;"></div>
<div class="abs" style="left:1076px;top:30px;width:1px;height:717px;background:#241a18;"></div>
<div class="abs" style="left:198px;top:30px;width:878px;height:1px;background:#d25e3a;"></div>
<div class="abs" style="left:0px;top:720px;width:209px;height:27px;background:#1f2933;border-top-right-radius:3px"></div>
<div class="t" style="left:1px;top:730px;font-size:12.7px;color:#e6e8ea;"><u>Talking:</u> Ala Revenco</div>
<div class="abs" style="left:0px;top:742px;width:47px;height:8px;background:#1f2933;border:1.5px solid #e8e8e8;border-radius:5px"></div>
</body></html>
